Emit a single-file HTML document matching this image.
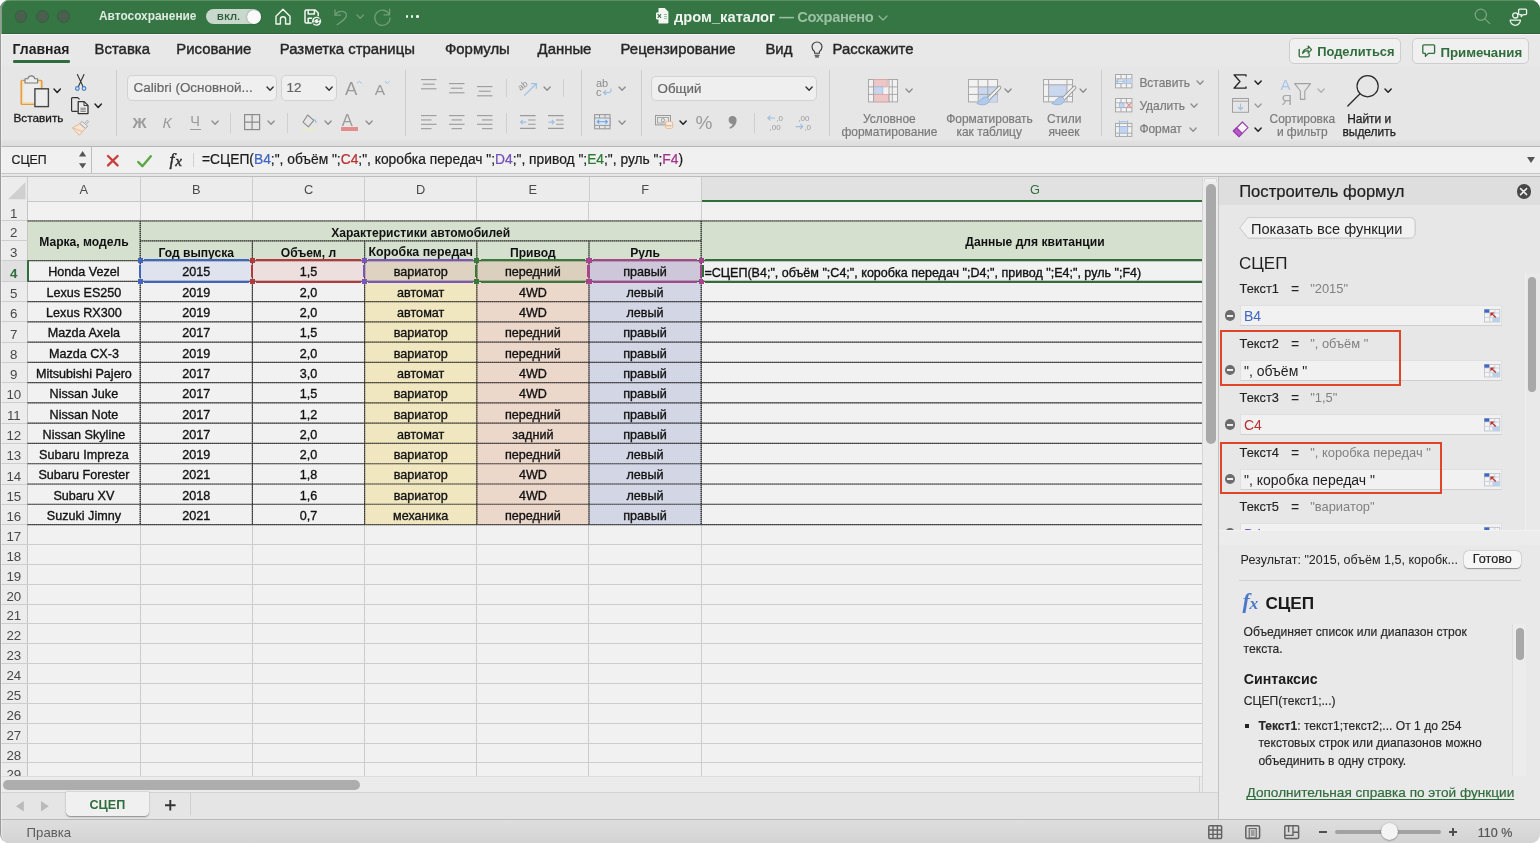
<!DOCTYPE html>
<html lang="ru"><head><meta charset="utf-8"><title>дром_каталог</title>
<style>
*{box-sizing:border-box;margin:0;padding:0}
html,body{width:1540px;height:843px;background:#fff;overflow:hidden}
body{font-family:"Liberation Sans",sans-serif;font-size:13px;color:#222;position:relative}
#win{position:absolute;left:0;top:0;width:1540px;height:843px;border-radius:9px;overflow:hidden;background:#e6e6e6;will-change:transform}
#win:after{content:"";position:absolute;left:0;top:0;width:1540px;height:843px;border-radius:9px;border-left:1px solid #9a9a9a;border-right:1px solid #b0b0b0;border-bottom:1px solid #999;box-shadow:inset 1px 0 0 rgba(255,255,255,.35);pointer-events:none}
.a{position:absolute}
.t{position:absolute;white-space:pre;line-height:1}
.c{text-align:center}
svg{position:absolute;overflow:visible}
.sep{position:absolute;width:1px;background:#cfcfcf}
</style></head>
<body><div id="win">
<div class="a" style="left:0px;top:0px;width:1540px;height:33.5px;background:#367644;border-top:1px solid #5c9166;border-bottom:1px solid #2d6538;"></div>
<div class="a" style="left:0px;top:33.5px;width:1540px;height:1px;background:#f4f4f4;"></div>
<div class="a" style="left:14.5px;top:10px;width:12.8px;height:12.8px;background:#4a5f4e;border-radius:50%;border:1px solid #2f6339;"></div>
<div class="a" style="left:35.8px;top:10px;width:12.8px;height:12.8px;background:#4a5f4e;border-radius:50%;border:1px solid #2f6339;"></div>
<div class="a" style="left:57.1px;top:10px;width:12.8px;height:12.8px;background:#4a5f4e;border-radius:50%;border:1px solid #2f6339;"></div>
<div class="t" style="top:11.01px;font-size:11.9px;color:#dfeae1;font-weight:bold;left:99px;">Автосохранение</div>
<div class="a" style="left:205.7px;top:9px;width:55.7px;height:15.2px;background:#c9d8cc;border-radius:8px;"></div>
<div class="t" style="top:12.34px;font-size:9.5px;color:#2e5c38;font-weight:bold;left:217px;letter-spacing:0.3px;">ВКЛ.</div>
<div class="a" style="left:246.5px;top:9.6px;width:14px;height:14px;background:#fafafa;border-radius:50%;box-shadow:0 0 1.5px rgba(0,0,0,.5);"></div>
<svg style="left:274.8px;top:7.6px;" width="16" height="17" viewBox="0 0 16 17"><path d="M1 16V8.3L8 1.2l7 7.1V16h-4.4v-4.7a2.6 2.6 0 0 0-5.2 0V16z" fill="none" stroke="#f2f6f2" stroke-width="1.4" stroke-linejoin="round"/></svg>
<svg style="left:303.8px;top:9px;" width="18" height="17" viewBox="0 0 18 17"><path d="M1 2.2a1.2 1.2 0 0 1 1.2-1.2h9l3 3v3.2M1 2.2v10.6a1.2 1.2 0 0 0 1.2 1.2h5.6M4.2 1v4h6.2V1M4.2 14V9.2h4" fill="none" stroke="#f2f6f2" stroke-width="1.5" stroke-linejoin="round"/><circle cx="12.6" cy="12.2" r="4.5" fill="#f2f6f2"/><path d="M10.2 11.6a2.6 2.6 0 0 1 4.6-1M15 12.8a2.6 2.6 0 0 1-4.6 1" fill="none" stroke="#367644" stroke-width="1.1"/><path d="M15.4 9.6v1.6h-1.6M9.8 14.8v-1.6h1.6" fill="none" stroke="#367644" stroke-width="1"/></svg>
<svg style="left:333.6px;top:8.6px;" width="14" height="16" viewBox="0 0 14 16"><path d="M1 .8v5.4h5.4" fill="none" stroke="#6f9f79" stroke-width="1.3" stroke-linecap="round" stroke-linejoin="round"/><path d="M1.2 6C3.6 1.6 11.6.8 12.4 6c.4 3.2-3.4 5.600-9.200 9.600" fill="none" stroke="#6f9f79" stroke-width="1.3" stroke-linecap="round"/></svg>
<svg style="left:357.3px;top:14.9px;" width="6.4" height="3.4" viewBox="0 0 6.4 3.4"><path d="M0 0L3.2 3.4L6.4 0" fill="none" stroke="#6f9f79" stroke-width="1.3" stroke-linecap="round" stroke-linejoin="round"/></svg>
<svg style="left:374.4px;top:8px;" width="17" height="17" viewBox="0 0 17 17"><path d="M15.600 1.2v5.600h-5.600" fill="none" stroke="#6f9f79" stroke-width="1.3" stroke-linecap="round" stroke-linejoin="round"/><path d="M15.2 6.400a7.600 7.600 0 1 0 .8 3.400" fill="none" stroke="#6f9f79" stroke-width="1.3" stroke-linecap="round"/></svg>
<div class="a" style="left:405.8px;top:15.4px;width:2.4px;height:2.4px;background:#f2f6f2;border-radius:50%;"></div>
<div class="a" style="left:411px;top:15.4px;width:2.4px;height:2.4px;background:#f2f6f2;border-radius:50%;"></div>
<div class="a" style="left:416.2px;top:15.4px;width:2.4px;height:2.4px;background:#f2f6f2;border-radius:50%;"></div>
<svg style="left:656px;top:8.4px;" width="12.4" height="15.6" viewBox="0 0 12.4 15.6"><path d="M2.5 0h6.2l3.7 3.7v10.6a1.2 1.2 0 0 1-1.2 1.2H2.5z" fill="#f4f7f4"/><rect x="0" y="4.6" width="6.8" height="6.8" rx=".8" fill="#f4f7f4"/><path d="M1.7 6.1l3.4 3.8M5.1 6.1L1.7 9.9" stroke="#367644" stroke-width="1.1"/><path d="M8 6.5h3M8 8.5h3M8 10.5h3" stroke="#9cc0a4" stroke-width="1"/></svg>
<div class="t" style="top:10.29px;font-size:14.7px;color:#eef3ef;font-weight:bold;left:674px;">дром_каталог <span style="color:#9cc0a4;letter-spacing:-0.38px">— Сохранено</span></div>
<svg style="left:878.7px;top:15.5px;" width="8" height="4" viewBox="0 0 8 4"><path d="M0 0L4 4L8 0" fill="none" stroke="#8fb597" stroke-width="1.3" stroke-linecap="round" stroke-linejoin="round"/></svg>
<svg style="left:1474px;top:8px;" width="18" height="18" viewBox="0 0 18 18"><circle cx="6.8" cy="6.8" r="5.6" fill="none" stroke="#7aa684" stroke-width="1.2"/><path d="M10.9 10.9l4.8 4.8" stroke="#7aa684" stroke-width="1.2" stroke-linecap="round"/></svg>
<svg style="left:1509px;top:7.5px;" width="19" height="18" viewBox="0 0 19 18"><circle cx="6.3" cy="7.4" r="2.6" fill="none" stroke="#eef3ef" stroke-width="1.3"/><path d="M1.2 12.2h10.2a5.1 5.1 0 0 1-10.2 0z" fill="none" stroke="#eef3ef" stroke-width="1.3" stroke-linejoin="round"/><path d="M10.6 1.2h6a1 1 0 0 1 1 1v3.4a1 1 0 0 1-1 1h-2.4l-2 2v-2h-1.6a1 1 0 0 1-1-1V2.2a1 1 0 0 1 1-1z" fill="none" stroke="#eef3ef" stroke-width="1.3" stroke-linejoin="round"/></svg>
<div class="a" style="left:0px;top:34.5px;width:1540px;height:31.5px;background:#e8e8e8;"></div>
<div class="t" style="top:42.42px;font-size:14px;color:#1e1e1e;font-weight:bold;left:12.5px;">Главная</div>
<div class="a" style="left:12.5px;top:60px;width:57px;height:2.6px;background:#2f6d3d;border-radius:1.3px;"></div>
<div class="t" style="top:42px;font-size:14.9px;color:#262626;left:94.6px;-webkit-text-stroke:0.4px #262626;">Вставка</div>
<div class="t" style="top:42px;font-size:14.9px;color:#262626;left:176.3px;-webkit-text-stroke:0.4px #262626;">Рисование</div>
<div class="t" style="top:42px;font-size:14.9px;color:#262626;left:279.8px;-webkit-text-stroke:0.4px #262626;">Разметка страницы</div>
<div class="t" style="top:42px;font-size:14.9px;color:#262626;left:445px;-webkit-text-stroke:0.4px #262626;">Формулы</div>
<div class="t" style="top:42px;font-size:14.9px;color:#262626;left:537.6px;-webkit-text-stroke:0.4px #262626;">Данные</div>
<div class="t" style="top:42px;font-size:14.9px;color:#262626;left:620.6px;-webkit-text-stroke:0.4px #262626;">Рецензирование</div>
<div class="t" style="top:42px;font-size:14.9px;color:#262626;left:765.4px;-webkit-text-stroke:0.4px #262626;">Вид</div>
<div class="t" style="top:42px;font-size:14.9px;color:#262626;left:832.6px;-webkit-text-stroke:0.4px #262626;">Расскажите</div>
<svg style="left:810.5px;top:41px;" width="12" height="16.5" viewBox="0 0 12 16.5"><path d="M3.6 10.6C2 9.4 1 7.8 1 6a5 5 0 0 1 10 0c0 1.8-1 3.4-2.6 4.6v1.6H3.6zM4 14.2h4M4.6 15.9h2.8" fill="none" stroke="#3a3a3a" stroke-width="1.15" stroke-linejoin="round" stroke-linecap="round"/></svg>
<div class="a" style="left:1289.4px;top:38.4px;width:112px;height:25.2px;background:#f0f0f0;border:1px solid #cdcdcd;border-radius:5px;"></div>
<svg style="left:1298px;top:43.5px;" width="14" height="14" viewBox="0 0 14 14"><path d="M1.200 5.400v6.400a1 1 0 0 0 1 1h8a1 1 0 0 0 1-1V9.800" fill="none" stroke="#2f6d3d" stroke-width="1.300" stroke-linecap="round"/><path d="M4.6 9.4c.4-3 2.4-4.7 5.6-4.8V2l3.4 3.6-3.4 3.6V6.7c-2.4 0-4.2.8-5.6 2.7z" fill="none" stroke="#2f6d3d" stroke-width="1.2" stroke-linejoin="round"/></svg>
<div class="t" style="top:46.04px;font-size:12.9px;color:#2f6d3d;font-weight:bold;left:1317.2px;">Поделиться</div>
<div class="a" style="left:1412.4px;top:38.4px;width:116.4px;height:25.2px;background:#f0f0f0;border:1px solid #cdcdcd;border-radius:5px;"></div>
<svg style="left:1421.6px;top:44px;" width="13.5" height="13.5" viewBox="0 0 13.5 13.5"><path d="M1.8.8h9.8a1 1 0 0 1 1 1v6.6a1 1 0 0 1-1 1H6.4L3.4 12.4V9.4H1.8a1 1 0 0 1-1-1V1.8a1 1 0 0 1 1-1z" fill="none" stroke="#2f6d3d" stroke-width="1.3" stroke-linejoin="round"/></svg>
<div class="t" style="top:45.85px;font-size:13.3px;color:#2f6d3d;font-weight:bold;left:1440.4px;">Примечания</div>
<div class="a" style="left:0px;top:66px;width:1540px;height:74.5px;background:#e6e6e6;"></div>
<svg style="left:19.5px;top:75px;" width="31" height="34" viewBox="0 0 31 34"><rect x="1.2" y="5.4" width="20.6" height="23.8" rx=".8" fill="#ececec" stroke="#e59a3c" stroke-width="1.5"/><rect x="2.6" y="6.8" width="17.8" height="21" fill="none" stroke="#f3dba8" stroke-width="1.3"/>
<path d="M5 8V3.800h2.800a3.600 3.800 0 0 1 7 0h2.800V8z" fill="#ededed" stroke="#7a7a7a" stroke-width="1.1" stroke-linejoin="round"/>
<rect x="14.9" y="13.800" width="13.5" height="17.800" fill="#ececec" stroke="#454545" stroke-width="1.4"/></svg>
<svg style="left:54px;top:88.7px;" width="6.4" height="3.4" viewBox="0 0 6.4 3.4"><path d="M0 0L3.2 3.4L6.4 0" fill="none" stroke="#222" stroke-width="1.5" stroke-linecap="round" stroke-linejoin="round"/></svg>
<div class="t" style="top:113.35px;font-size:11.8px;color:#1c1c1c;left:13.5px;-webkit-text-stroke:0.3px #1c1c1c;">Вставить</div>
<svg style="left:74.6px;top:74px;" width="11.4" height="17.5" viewBox="0 0 11.4 17.5"><path d="M2.400 0.500L8 12.600M9 0.500L3.400 12.600" stroke="#333" stroke-width="1.100" stroke-linecap="round"/>
<circle cx="2.400" cy="14.500" r="1.800" fill="none" stroke="#3f7fd0" stroke-width="1.200"/><circle cx="9" cy="14.500" r="1.800" fill="none" stroke="#3f7fd0" stroke-width="1.200"/></svg>
<svg style="left:71.4px;top:96.8px;" width="18" height="17.5" viewBox="0 0 18 17.5"><path d="M6.600 14.400H1.600a1 1 0 0 1-1-1V1.600a1 1 0 0 1 1-1h5l2 1.800" fill="none" stroke="#333" stroke-width="1.200"/>
<path d="M7.200 4.600h6l3.800 3.800v8.200h-9.800z" fill="#ececec" stroke="#333" stroke-width="1.300" stroke-linejoin="round"/><path d="M13 4.800v3.800h3.800" fill="none" stroke="#333" stroke-width="1"/>
<path d="M9.400 11.200h5.400M9.400 12.800h5.400M9.400 14.400h5.400" stroke="#666" stroke-width=".8"/></svg>
<svg style="left:95px;top:103.7px;" width="6.4" height="3.4" viewBox="0 0 6.4 3.4"><path d="M0 0L3.2 3.4L6.4 0" fill="none" stroke="#222" stroke-width="1.5" stroke-linecap="round" stroke-linejoin="round"/></svg>
<svg style="left:72px;top:120px;" width="17" height="16" viewBox="0 0 17 16"><path d="M7.600 3.800l5.800 4.500-6.200 7.100-6.700-7.600z" fill="#f4e4d4" stroke="#e8b890" stroke-width="1" stroke-linejoin="round"/><path d="M.5 7.800l9.500 3.600" stroke="#e8b890" stroke-width=".9"/>
<path d="M7.800 3.600l2-2.200 5.800 4.600-2 2.400z" fill="#ebebeb" stroke="#a8a8a8" stroke-width="1" stroke-linejoin="round"/><path d="M12.800 3.200L15.200.4l1.400 1.100-2.400 2.900" fill="#ebebeb" stroke="#a8a8a8" stroke-width="1" stroke-linejoin="round"/></svg>
<div class="a" style="left:116.4px;top:70px;width:1px;height:66px;background:#cdcdcd;"></div>
<div class="a" style="left:127.3px;top:75.4px;width:150.2px;height:25.3px;background:#efefef;border:1px solid #d2d2d2;border-radius:5px;"></div>
<div class="t" style="top:81.28px;font-size:13.45px;color:#666;left:133.6px;-webkit-text-stroke:0.2px #666;">Calibri (Основной...</div>
<svg style="left:266.5px;top:86.95px;" width="6.2" height="3.3" viewBox="0 0 6.2 3.3"><path d="M0 0L3.1 3.3L6.2 0" fill="none" stroke="#333" stroke-width="1.4" stroke-linecap="round" stroke-linejoin="round"/></svg>
<div class="a" style="left:280.5px;top:75.4px;width:56.6px;height:25.3px;background:#efefef;border:1px solid #d2d2d2;border-radius:5px;"></div>
<div class="t" style="top:81.28px;font-size:13.45px;color:#666;left:286.6px;-webkit-text-stroke:0.2px #666;">12</div>
<svg style="left:326.1px;top:86.95px;" width="6.2" height="3.3" viewBox="0 0 6.2 3.3"><path d="M0 0L3.1 3.3L6.2 0" fill="none" stroke="#333" stroke-width="1.4" stroke-linecap="round" stroke-linejoin="round"/></svg>
<div class="t" style="top:79.6px;font-size:18.5px;color:#9a9a9a;left:345px;">A</div>
<svg style="left:356.8px;top:80.6px;" width="4.6" height="2.6" viewBox="0 0 4.6 2.6"><path d="M0 2.4L2.3.3 4.6 2.4" fill="none" stroke="#9dbfe3" stroke-width="1"/></svg>
<div class="t" style="top:82.02px;font-size:15.5px;color:#9a9a9a;left:374.8px;">A</div>
<svg style="left:384.6px;top:80.6px;" width="4.6" height="2.6" viewBox="0 0 4.6 2.6"><path d="M0 .3L2.3 2.4 4.6 .3" fill="none" stroke="#9dbfe3" stroke-width="1"/></svg>
<div class="t" style="top:114.52px;font-size:15.5px;color:#9b9b9b;font-weight:bold;left:132.6px;">Ж</div>
<div class="t" style="top:114.52px;font-size:15.5px;color:#9b9b9b;left:162.6px;font-style:italic;">К</div>
<div class="t" style="top:114.48px;font-size:14.5px;color:#9b9b9b;left:190.2px;">Ч</div>
<div class="a" style="left:190px;top:128.6px;width:11px;height:1px;background:#9b9b9b;"></div>
<svg style="left:211.7px;top:120.75px;" width="6.2" height="3.3" viewBox="0 0 6.2 3.3"><path d="M0 0L3.1 3.3L6.2 0" fill="none" stroke="#8c8c8c" stroke-width="1.3" stroke-linecap="round" stroke-linejoin="round"/></svg>
<div class="a" style="left:230.4px;top:113px;width:1px;height:19.5px;background:#cfcfcf;"></div>
<svg style="left:243.6px;top:113.6px;" width="16.2" height="16.2" viewBox="0 0 16.2 16.2"><rect x=".6" y=".6" width="15" height="15" fill="none" stroke="#8a8a8a" stroke-width="1.2"/><path d="M8.1 .6v15M.6 8.1h15" stroke="#8a8a8a" stroke-width="1.2"/></svg>
<svg style="left:268.3px;top:120.75px;" width="6.2" height="3.3" viewBox="0 0 6.2 3.3"><path d="M0 0L3.1 3.3L6.2 0" fill="none" stroke="#8c8c8c" stroke-width="1.3" stroke-linecap="round" stroke-linejoin="round"/></svg>
<div class="a" style="left:287px;top:113px;width:1px;height:19.5px;background:#cfcfcf;"></div>
<svg style="left:302.4px;top:113.5px;" width="15.5" height="16" viewBox="0 0 15.5 16"><path d="M5.6 1l6.2 5.4-5.4 6.4L1 8.2z" fill="none" stroke="#8c8c8c" stroke-width="1.1" stroke-linejoin="round"/>
<path d="M11.6 5.4c1.4.4 2.4 1.6 2.6 3.6" fill="none" stroke="#9dbfe3" stroke-width="1.2"/><path d="M0 15h14" stroke="#e6ecd0" stroke-width="2.4"/></svg>
<svg style="left:324.9px;top:120.75px;" width="6.2" height="3.3" viewBox="0 0 6.2 3.3"><path d="M0 0L3.1 3.3L6.2 0" fill="none" stroke="#8c8c8c" stroke-width="1.3" stroke-linecap="round" stroke-linejoin="round"/></svg>
<div class="t" style="top:111.65px;font-size:16.5px;color:#9b9b9b;left:341.8px;">A</div>
<div class="a" style="left:341.4px;top:127.4px;width:17px;height:3.6px;background:#e58c8c;"></div>
<svg style="left:365.7px;top:120.75px;" width="6.2" height="3.3" viewBox="0 0 6.2 3.3"><path d="M0 0L3.1 3.3L6.2 0" fill="none" stroke="#8c8c8c" stroke-width="1.3" stroke-linecap="round" stroke-linejoin="round"/></svg>
<div class="a" style="left:404.9px;top:70px;width:1px;height:66px;background:#cdcdcd;"></div>
<svg style="left:420.8px;top:79.2px;" width="15.5" height="13.8" viewBox="0 0 15.5 13.8"><path d="M0 0.6H15.5" stroke="#9a9a9a" stroke-width="1.1"/><path d="M1.75 5.2H13.75" stroke="#9a9a9a" stroke-width="1.1"/><path d="M0 9.8H15.5" stroke="#9a9a9a" stroke-width="1.1"/></svg>
<svg style="left:448.6px;top:82.6px;" width="15.5" height="13.8" viewBox="0 0 15.5 13.8"><path d="M0 0.6H15.5" stroke="#9a9a9a" stroke-width="1.1"/><path d="M1.75 5.2H13.75" stroke="#9a9a9a" stroke-width="1.1"/><path d="M0 9.8H15.5" stroke="#9a9a9a" stroke-width="1.1"/></svg>
<svg style="left:476.6px;top:86.2px;" width="15.5" height="13.8" viewBox="0 0 15.5 13.8"><path d="M0 0.6H15.5" stroke="#9a9a9a" stroke-width="1.1"/><path d="M1.75 5.2H13.75" stroke="#9a9a9a" stroke-width="1.1"/><path d="M0 9.8H15.5" stroke="#9a9a9a" stroke-width="1.1"/></svg>
<div class="a" style="left:506px;top:78.7px;width:1px;height:18.6px;background:#cfcfcf;"></div>
<svg style="left:519px;top:78px;" width="19" height="19" viewBox="0 0 19 19"><text x="0" y="9.5" font-size="9" fill="#8c8c8c" transform="rotate(-38 6 9)" font-family="Liberation Sans">ab</text><path d="M5.2 17.6L17 6M12 5.6h5.3v5.2" fill="none" stroke="#9dbfe3" stroke-width="1.2"/></svg>
<svg style="left:543.9px;top:86.95px;" width="6.2" height="3.3" viewBox="0 0 6.2 3.3"><path d="M0 0L3.1 3.3L6.2 0" fill="none" stroke="#8c8c8c" stroke-width="1.3" stroke-linecap="round" stroke-linejoin="round"/></svg>
<div class="a" style="left:562.9px;top:78.7px;width:1px;height:18.6px;background:#cfcfcf;"></div>
<svg style="left:420.8px;top:115px;" width="15.5" height="17.4" viewBox="0 0 15.5 17.4"><path d="M0 0.6H15.5" stroke="#9a9a9a" stroke-width="1.1"/><path d="M0 4.95H10.5" stroke="#9a9a9a" stroke-width="1.1"/><path d="M0 9.3H15.5" stroke="#9a9a9a" stroke-width="1.1"/><path d="M0 13.65H10.5" stroke="#9a9a9a" stroke-width="1.1"/></svg>
<svg style="left:448.6px;top:115px;" width="15.5" height="17.4" viewBox="0 0 15.5 17.4"><path d="M0 0.6H15.5" stroke="#9a9a9a" stroke-width="1.1"/><path d="M2.5 4.95H13" stroke="#9a9a9a" stroke-width="1.1"/><path d="M0 9.3H15.5" stroke="#9a9a9a" stroke-width="1.1"/><path d="M2.5 13.65H13" stroke="#9a9a9a" stroke-width="1.1"/></svg>
<svg style="left:476.6px;top:115px;" width="15.5" height="17.4" viewBox="0 0 15.5 17.4"><path d="M0 0.6H15.5" stroke="#9a9a9a" stroke-width="1.1"/><path d="M5 4.95H15.5" stroke="#9a9a9a" stroke-width="1.1"/><path d="M0 9.3H15.5" stroke="#9a9a9a" stroke-width="1.1"/><path d="M5 13.65H15.5" stroke="#9a9a9a" stroke-width="1.1"/></svg>
<div class="a" style="left:506px;top:113px;width:1px;height:19.5px;background:#cfcfcf;"></div>
<svg style="left:520.4px;top:115px;" width="15.6" height="14" viewBox="0 0 15.6 14"><path d="M0 .6h15.6M8 4.95h7.6M8 9.3h7.6M0 13.4h15.6" stroke="#9a9a9a" stroke-width="1.1"/><path d="M6.4 7.1H.6M2.8 4.8L.5 7.1l2.3 2.3" fill="none" stroke="#9dbfe3" stroke-width="1.1"/></svg>
<svg style="left:548px;top:115px;" width="15.6" height="14" viewBox="0 0 15.6 14"><path d="M0 .6h15.6M8 4.95h7.6M8 9.3h7.6M0 13.4h15.6" stroke="#9a9a9a" stroke-width="1.1"/><path d="M.4 7.1h5.8M3.8 4.8l2.3 2.3-2.3 2.3" fill="none" stroke="#9dbfe3" stroke-width="1.1"/></svg>
<div class="a" style="left:580.9px;top:70px;width:1px;height:66px;background:#cdcdcd;"></div>
<svg style="left:596px;top:80px;" width="17" height="17" viewBox="0 0 17 17"><text x="0" y="7.4" font-size="11" fill="#8c8c8c" font-family="Liberation Sans">ab</text><text x="0" y="16" font-size="11" fill="#8c8c8c" font-family="Liberation Sans">c</text><path d="M15 8.6v1.6a2.4 2.4 0 0 1-2.4 2.4H7.8M10 10.2l-2.4 2.4 2.4 2.4" fill="none" stroke="#9dbfe3" stroke-width="1.2"/></svg>
<svg style="left:619.2px;top:86.95px;" width="6.2" height="3.3" viewBox="0 0 6.2 3.3"><path d="M0 0L3.1 3.3L6.2 0" fill="none" stroke="#8c8c8c" stroke-width="1.3" stroke-linecap="round" stroke-linejoin="round"/></svg>
<svg style="left:594.3px;top:114px;" width="16.6" height="15.4" viewBox="0 0 16.6 15.4"><rect x=".6" y=".6" width="15.4" height="14.2" fill="none" stroke="#9a9a9a" stroke-width="1.1"/><rect x=".6" y="4" width="15.4" height="7.4" fill="#dde8f5" stroke="#9a9a9a" stroke-width="1"/><path d="M5.5 .6v3.4M11 .6v3.4M5.5 11.4v3.4M11 11.4v3.4" stroke="#9a9a9a" stroke-width="1"/><path d="M3.2 7.7h10.2M5.2 5.8L3.2 7.7l2 1.9M11.4 5.8l2 1.9-2 1.9" fill="none" stroke="#6fa0d6" stroke-width="1.1"/></svg>
<svg style="left:619.2px;top:120.75px;" width="6.2" height="3.3" viewBox="0 0 6.2 3.3"><path d="M0 0L3.1 3.3L6.2 0" fill="none" stroke="#8c8c8c" stroke-width="1.3" stroke-linecap="round" stroke-linejoin="round"/></svg>
<div class="a" style="left:640.6px;top:70px;width:1px;height:66px;background:#cdcdcd;"></div>
<div class="a" style="left:651.4px;top:75.6px;width:165.2px;height:25.2px;background:#efefef;border:1px solid #d2d2d2;border-radius:5px;"></div>
<div class="t" style="top:81.55px;font-size:13.3px;color:#666;left:657.6px;-webkit-text-stroke:0.2px #666;">Общий</div>
<svg style="left:805.5px;top:87.15px;" width="6.2" height="3.3" viewBox="0 0 6.2 3.3"><path d="M0 0L3.1 3.3L6.2 0" fill="none" stroke="#333" stroke-width="1.4" stroke-linecap="round" stroke-linejoin="round"/></svg>
<svg style="left:654.8px;top:115.4px;" width="18.4" height="14.4" viewBox="0 0 18.4 14.4"><rect x=".5" y=".5" width="15" height="9.4" fill="none" stroke="#9a9a9a" stroke-width="1"/><rect x="2.4" y="2.4" width="11.2" height="5.6" fill="none" stroke="#9a9a9a" stroke-width=".8"/><circle cx="8" cy="5.2" r="1.7" fill="none" stroke="#9a9a9a" stroke-width=".8"/><path d="M10.6 7.6c0-1.6 7-1.6 7 0v4.8c0 1.6-7 1.6-7 0zM10.6 9.9c0 1.5 7 1.5 7 0" fill="#f6e8da" stroke="#e9b68c" stroke-width=".9"/></svg>
<svg style="left:679.8px;top:120.95px;" width="6.2" height="3.3" viewBox="0 0 6.2 3.3"><path d="M0 0L3.1 3.3L6.2 0" fill="none" stroke="#222" stroke-width="1.5" stroke-linecap="round" stroke-linejoin="round"/></svg>
<div class="t" style="top:113.37px;font-size:19px;color:#9a9a9a;left:695.6px;">%</div>
<svg style="left:728.4px;top:115.6px;" width="9" height="13" viewBox="0 0 9 13"><path d="M4.6 0a4 4 0 0 1 4 4.2c0 4-3 7.4-6.6 8.6l-.6-1.2c1.8-.9 3-2.2 3.3-3.6A3.9 3.9 0 0 1 .6 4 4 4 0 0 1 4.6 0z" fill="#8c8c8c"/></svg>
<div class="a" style="left:754.3px;top:113px;width:1px;height:19.5px;background:#cfcfcf;"></div>
<svg style="left:766.6px;top:113.8px;" width="18" height="17" viewBox="0 0 18 17"><path d="M8 4H.8M3.4 1.6L.8 4l2.6 2.4" fill="none" stroke="#9dbfe3" stroke-width="1.1"/><text x="9.4" y="7.2" font-size="8" fill="#9a9a9a" font-family="Liberation Sans">,0</text><text x="2.6" y="16" font-size="8" fill="#9a9a9a" font-family="Liberation Sans">,00</text></svg>
<svg style="left:794.6px;top:113.8px;" width="18" height="17" viewBox="0 0 18 17"><text x="3.4" y="7.2" font-size="8" fill="#9a9a9a" font-family="Liberation Sans">,00</text><path d="M.6 12.6h7.2M5.2 10.2l2.6 2.4-2.6 2.4" fill="none" stroke="#9dbfe3" stroke-width="1.1"/><text x="9.4" y="16" font-size="8" fill="#9a9a9a" font-family="Liberation Sans">,0</text></svg>
<div class="a" style="left:828.6px;top:70px;width:1px;height:66px;background:#cdcdcd;"></div>
<svg style="left:868px;top:78.5px;" width="30" height="23.4" viewBox="0 0 30 23.4"><rect x=".5" y=".5" width="29" height="22.4" fill="#f2f2f2" stroke="#a8a8a8" stroke-width="1"/>
<rect x="5.6" y=".5" width="13.6" height="7.4" fill="#edc6c6" stroke="#e3a3a3" stroke-width=".8"/><rect x="5.6" y="7.9" width="9.2" height="7.4" fill="#c6d6ee" stroke="#9fb9e0" stroke-width=".8"/><rect x="5.6" y="15.4" width="15.4" height="7.4" fill="#edc6c6" stroke="#e3a3a3" stroke-width=".8"/>
<path d="M5.6 .5v22.4M21 .5v22.4M24.3 .5v22.4M.5 7.9h5M.5 15.4h5M21 7.9h8.5M21 15.4h8.5" stroke="#a8a8a8" stroke-width="1" fill="none"/></svg>
<svg style="left:905.7px;top:88.95px;" width="6.2" height="3.3" viewBox="0 0 6.2 3.3"><path d="M0 0L3.1 3.3L6.2 0" fill="none" stroke="#8c8c8c" stroke-width="1.3" stroke-linecap="round" stroke-linejoin="round"/></svg>
<div class="t" style="top:113.98px;font-size:11.95px;color:#7a7a7a;left:689.4px;width:400px;text-align:center;-webkit-text-stroke:0.18px;">Условное</div>
<div class="t" style="top:127.48px;font-size:11.95px;color:#7a7a7a;left:689.4px;width:400px;text-align:center;-webkit-text-stroke:0.18px;">форматирование</div>
<svg style="left:967.5px;top:78.5px;" width="32" height="25" viewBox="0 0 32 25"><rect x=".5" y=".5" width="29" height="22.4" fill="#f2f2f2" stroke="#a8a8a8" stroke-width="1"/>
<rect x="10.2" y="7.9" width="19.3" height="15" fill="#c9d8ee"/>
<path d="M10.2 .5v22.4M19.8 .5v22.4M.5 7.9h29M.5 15.4h29" stroke="#a8a8a8" stroke-width="1" fill="none"/>
<path d="M31.4 8.6L20.2 20" stroke="#9c9c9c" stroke-width="4" stroke-linecap="round"/><path d="M31.4 8.6L20.2 20" stroke="#f2f2f2" stroke-width="2" stroke-linecap="round"/>
<path d="M19 18.2c-4.4-.8-5.8 3.4-10.2 6.2 4.8 2.6 12 1.6 13-3.6z" fill="#b3c9e8" stroke="#8fb0dc" stroke-width=".9"/></svg>
<svg style="left:1004.9px;top:88.95px;" width="6.2" height="3.3" viewBox="0 0 6.2 3.3"><path d="M0 0L3.1 3.3L6.2 0" fill="none" stroke="#8c8c8c" stroke-width="1.3" stroke-linecap="round" stroke-linejoin="round"/></svg>
<div class="t" style="top:113.98px;font-size:11.95px;color:#7a7a7a;left:789.5px;width:400px;text-align:center;-webkit-text-stroke:0.18px;">Форматировать</div>
<div class="t" style="top:127.48px;font-size:11.95px;color:#7a7a7a;left:789.2px;width:400px;text-align:center;-webkit-text-stroke:0.18px;">как таблицу</div>
<svg style="left:1042.9px;top:78.5px;" width="32" height="25" viewBox="0 0 32 25"><rect x=".5" y=".5" width="29" height="22.4" fill="#f2f2f2" stroke="#a8a8a8" stroke-width="1"/>
<rect x="5.6" y="5.8" width="18.4" height="11.6" fill="#c9d8ee"/>
<path d="M5.6 .5v22.4M24 .5v22.4M.5 5.8h29M.5 17.4h29" stroke="#a8a8a8" stroke-width="1" fill="none"/>
<path d="M31.4 8.6L20.2 20" stroke="#9c9c9c" stroke-width="4" stroke-linecap="round"/><path d="M31.4 8.6L20.2 20" stroke="#f2f2f2" stroke-width="2" stroke-linecap="round"/>
<path d="M19 18.2c-4.4-.8-5.8 3.4-10.2 6.2 4.8 2.6 12 1.6 13-3.6z" fill="#b3c9e8" stroke="#8fb0dc" stroke-width=".9"/></svg>
<svg style="left:1079.9px;top:88.95px;" width="6.2" height="3.3" viewBox="0 0 6.2 3.3"><path d="M0 0L3.1 3.3L6.2 0" fill="none" stroke="#8c8c8c" stroke-width="1.3" stroke-linecap="round" stroke-linejoin="round"/></svg>
<div class="t" style="top:113.98px;font-size:11.95px;color:#7a7a7a;left:864.2px;width:400px;text-align:center;-webkit-text-stroke:0.18px;">Стили</div>
<div class="t" style="top:127.48px;font-size:11.95px;color:#7a7a7a;left:864px;width:400px;text-align:center;-webkit-text-stroke:0.18px;">ячеек</div>
<div class="a" style="left:1101px;top:70px;width:1px;height:66px;background:#cdcdcd;"></div>
<svg style="left:1115.3px;top:74.4px;" width="17.4" height="14.4" viewBox="0 0 17.4 14.4"><rect x=".5" y=".5" width="16.4" height="13.4" fill="#f3f3f3" stroke="#a8a8a8" stroke-width="1"/><path d="M6 .5v4.4M11.4 .5v4.4M6 9.6v4.3M11.4 9.6v4.3M.5 4.9h16.4M.5 9.6h16.4" stroke="#a8a8a8" stroke-width="1"/><rect x="7.4" y="4.9" width="9.5" height="4.7" fill="#c3d5ee"/><path d="M11.4 4.9v4.7" stroke="#a9c3e6" stroke-width="1"/><path d="M9.6 7.25H1.4M4 4.6L1.3 7.25 4 9.9" fill="none" stroke="#9dbfe3" stroke-width="1.1"/></svg>
<div class="t" style="top:77.58px;font-size:11.95px;color:#7a7a7a;left:1139.4px;-webkit-text-stroke:0.18px;">Вставить</div>
<svg style="left:1196.6px;top:80.75px;" width="6.2" height="3.3" viewBox="0 0 6.2 3.3"><path d="M0 0L3.1 3.3L6.2 0" fill="none" stroke="#8c8c8c" stroke-width="1.3" stroke-linecap="round" stroke-linejoin="round"/></svg>
<svg style="left:1115.3px;top:98.3px;" width="17.4" height="14.4" viewBox="0 0 17.4 14.4"><rect x=".5" y=".5" width="16.4" height="13.4" fill="#f3f3f3" stroke="#a8a8a8" stroke-width="1"/><path d="M6 .5v4.4M11.4 .5v4.4M6 9.6v4.3M11.4 9.6v4.3M.5 4.9h16.4M.5 9.6h16.4" stroke="#a8a8a8" stroke-width="1"/><rect x="1" y="5.4" width="15.4" height="3.7" fill="#ededed"/><rect x="4.4" y="5" width="4.6" height="4.5" fill="#c3d5ee" stroke="#9dbbe2" stroke-width=".8"/><path d="M11.6 4.8l4.8 4.9M16.4 4.8l-4.8 4.9" stroke="#e58c8c" stroke-width="1.1"/></svg>
<div class="t" style="top:100.98px;font-size:11.95px;color:#7a7a7a;left:1139.4px;-webkit-text-stroke:0.18px;">Удалить</div>
<svg style="left:1190.9px;top:104.15px;" width="6.2" height="3.3" viewBox="0 0 6.2 3.3"><path d="M0 0L3.1 3.3L6.2 0" fill="none" stroke="#8c8c8c" stroke-width="1.3" stroke-linecap="round" stroke-linejoin="round"/></svg>
<svg style="left:1115.3px;top:120px;" width="17.4" height="17" viewBox="0 0 17.4 17"><path d="M4.4 .4v2.6M12.6 .4v2.6M4.4 1.7h8.2" stroke="#9dbfe3" stroke-width="1"/><rect x=".5" y="3.4" width="16.4" height="13" fill="#f3f3f3" stroke="#a8a8a8" stroke-width="1"/><path d="M4.4 3.4v13M12.6 3.4v13M.5 6.6h16.4M.5 13.2h16.4" stroke="#a8a8a8" stroke-width="1"/><rect x="4.4" y="6.6" width="8.2" height="6.6" fill="#c3d5ee" stroke="#9dbbe2" stroke-width=".8"/></svg>
<div class="t" style="top:124.28px;font-size:11.95px;color:#7a7a7a;left:1139.4px;-webkit-text-stroke:0.18px;">Формат</div>
<svg style="left:1189.9px;top:127.55px;" width="6.2" height="3.3" viewBox="0 0 6.2 3.3"><path d="M0 0L3.1 3.3L6.2 0" fill="none" stroke="#8c8c8c" stroke-width="1.3" stroke-linecap="round" stroke-linejoin="round"/></svg>
<div class="a" style="left:1217.5px;top:70px;width:1px;height:66px;background:#cdcdcd;"></div>
<svg style="left:1233px;top:74px;" width="14" height="15" viewBox="0 0 14 15"><path d="M13 2.6V.8H1l6 6.7-6 6.7h12v-1.8" fill="none" stroke="#222" stroke-width="1.3" stroke-linejoin="round"/></svg>
<svg style="left:1255.4px;top:80.95px;" width="6.2" height="3.3" viewBox="0 0 6.2 3.3"><path d="M0 0L3.1 3.3L6.2 0" fill="none" stroke="#222" stroke-width="1.5" stroke-linecap="round" stroke-linejoin="round"/></svg>
<svg style="left:1231.6px;top:98px;" width="17" height="14.8" viewBox="0 0 17 14.8"><rect x=".5" y=".5" width="16" height="13.8" fill="none" stroke="#a0a0a0" stroke-width="1"/><path d="M.5 3.2h16" stroke="#a0a0a0" stroke-width="1"/><path d="M8.5 5.4v6M6 9l2.5 2.6L11 9" fill="none" stroke="#9dbfe3" stroke-width="1.1"/></svg>
<svg style="left:1255.4px;top:104.15px;" width="6.2" height="3.3" viewBox="0 0 6.2 3.3"><path d="M0 0L3.1 3.3L6.2 0" fill="none" stroke="#9a9a9a" stroke-width="1.3" stroke-linecap="round" stroke-linejoin="round"/></svg>
<svg style="left:1231.6px;top:120.6px;" width="17" height="16.6" viewBox="0 0 17 16.6"><path d="M10.4 1L16 6.6 7 15.6 1.4 10z" fill="#f4f4f4" stroke="#9c3fae" stroke-width="1.2" stroke-linejoin="round"/><path d="M4.6 6.8l5.6 5.6L7 15.6 1.4 10z" fill="#b65cc6" stroke="#9c3fae" stroke-width="1.2" stroke-linejoin="round"/></svg>
<svg style="left:1255.4px;top:127.75px;" width="6.2" height="3.3" viewBox="0 0 6.2 3.3"><path d="M0 0L3.1 3.3L6.2 0" fill="none" stroke="#222" stroke-width="1.5" stroke-linecap="round" stroke-linejoin="round"/></svg>
<div class="t" style="top:76.55px;font-size:15px;color:#a9c6e6;left:1280.6px;">А</div>
<div class="t" style="top:91.55px;font-size:15px;color:#a8a8a8;left:1281.2px;">Я</div>
<svg style="left:1293.6px;top:82.6px;" width="17.2" height="17.4" viewBox="0 0 17.2 17.4"><path d="M.6 .6h16l-5.8 7.4v8.4H6.4V8z" fill="none" stroke="#a0a0a0" stroke-width="1.1" stroke-linejoin="round"/></svg>
<svg style="left:1318.3px;top:88.55px;" width="6.2" height="3.3" viewBox="0 0 6.2 3.3"><path d="M0 0L3.1 3.3L6.2 0" fill="none" stroke="#b0b0b0" stroke-width="1.3" stroke-linecap="round" stroke-linejoin="round"/></svg>
<div class="t" style="top:114.28px;font-size:11.95px;color:#7a7a7a;left:1102.3px;width:400px;text-align:center;-webkit-text-stroke:0.18px;">Сортировка</div>
<div class="t" style="top:126.98px;font-size:11.95px;color:#7a7a7a;left:1102.3px;width:400px;text-align:center;-webkit-text-stroke:0.18px;">и фильтр</div>
<svg style="left:1346.5px;top:75px;" width="32" height="32" viewBox="0 0 32 32"><circle cx="20.6" cy="11.2" r="10.6" fill="none" stroke="#2a2a2a" stroke-width="1.2"/><path d="M13 18.8L.8 31" stroke="#2a2a2a" stroke-width="1.3" stroke-linecap="round"/></svg>
<svg style="left:1385.2px;top:88.55px;" width="6.2" height="3.3" viewBox="0 0 6.2 3.3"><path d="M0 0L3.1 3.3L6.2 0" fill="none" stroke="#222" stroke-width="1.5" stroke-linecap="round" stroke-linejoin="round"/></svg>
<div class="t" style="top:114.28px;font-size:11.95px;color:#1c1c1c;left:1169.2px;width:400px;text-align:center;-webkit-text-stroke:0.25px;">Найти и</div>
<div class="t" style="top:126.98px;font-size:11.95px;color:#1c1c1c;left:1169.2px;width:400px;text-align:center;-webkit-text-stroke:0.25px;">выделить</div>
<div class="a" style="left:0px;top:139.8px;width:1540px;height:6px;background:linear-gradient(#e3e3e3,#dcdcdc);"></div>
<div class="a" style="left:0px;top:145.6px;width:1540px;height:1px;background:#b6b6b6;"></div>
<div class="a" style="left:0px;top:146.5px;width:1540px;height:26.2px;background:#f0f0f0;"></div>
<div class="a" style="left:0px;top:172.6px;width:1540px;height:1px;background:#c6c6c6;"></div>
<div class="a" style="left:0px;top:173.6px;width:1540px;height:2.2px;background:#e6e6e6;"></div>
<div class="a" style="left:0px;top:175.6px;width:1540px;height:1.1px;background:#bcbcbc;"></div>
<div class="a" style="left:90.6px;top:146.5px;width:1.2px;height:26.2px;background:#bdbdbd;"></div>
<div class="t" style="top:153.62px;font-size:12.3px;color:#1c1c1c;left:11.6px;-webkit-text-stroke:0.22px;">СЦЕП</div>
<svg style="left:78.8px;top:151.1px;" width="7.2" height="17.6" viewBox="0 0 7.2 17.6"><path d="M0 5.4L3.6 0l3.6 5.4zM0 12.2l3.6 5.4 3.6-5.4z" fill="#555"/></svg>
<svg style="left:107.2px;top:154.6px;" width="11.6" height="11.4" viewBox="0 0 11.6 11.4"><path d="M1 1l9.6 9.4M10.6 1L1 10.4" stroke="#c9413f" stroke-width="2.4" stroke-linecap="round"/></svg>
<svg style="left:137.3px;top:154.6px;" width="15" height="12.4" viewBox="0 0 15 12.4"><path d="M1.2 7l4.2 4.2L13.8 1.2" fill="none" stroke="#58a744" stroke-width="2.4" stroke-linecap="round" stroke-linejoin="round"/></svg>
<div class="t" style="top:151.38px;font-size:17.5px;color:#2c2c2c;left:169.4px;font-family:&quot;Liberation Serif&quot;,serif;font-style:italic;-webkit-text-stroke:0.45px #2c2c2c;">f</div>
<div class="t" style="top:154.15px;font-size:15px;color:#2c2c2c;left:175.2px;font-family:&quot;Liberation Serif&quot;,serif;font-style:italic;-webkit-text-stroke:0.45px #2c2c2c;">x</div>
<div class="a" style="left:193.4px;top:152.5px;width:1px;height:14.5px;background:#d0d0d0;"></div>
<div class="t" style="top:153.41px;font-size:13.8px;color:#1c1c1c;left:202px;-webkit-text-stroke:0.22px;">=СЦЕП(<span style="color:#3f66c0">B4</span>;", объём ";<span style="color:#b8312f">C4</span>;", коробка передач ";<span style="color:#7350b8">D4</span>;", привод ";<span style="color:#2f7a35">E4</span>;", руль ";<span style="color:#a2338a">F4</span>)</div>
<svg style="left:1527px;top:157.2px;" width="8" height="6" viewBox="0 0 8 6"><path d="M0 0h8L4 6z" fill="#555"/></svg>
<div class="a" style="left:0px;top:176.6px;width:1202.3px;height:599.4px;background:#f1f1f1;"></div>
<div class="a" style="left:0px;top:176.6px;width:1202.3px;height:25.2px;background:#ececec;border-bottom:1.2px solid #c6c6c6;"></div>
<div class="a" style="left:701.2px;top:176.6px;width:501.1px;height:24.6px;background:#e1e1e1;"></div>
<div class="a" style="left:701.2px;top:200px;width:501.1px;height:2.1px;background:#2f6d3d;"></div>
<svg style="left:7.8px;top:181.8px;" width="17.6" height="17.2" viewBox="0 0 17.6 17.2"><path d="M17.6 0V17.2H0z" fill="#cfcfcf"/></svg>
<div class="a" style="left:0px;top:201.2px;width:28.2px;height:574.8px;background:#ececec;border-right:1.4px solid #c4c4c4;"></div>
<div class="a" style="left:0px;top:260.6px;width:27px;height:20.7px;background:#e0e0e0;"></div>
<div class="t" style="top:184.18px;font-size:12.8px;color:#4a4a4a;left:63.9px;width:40px;text-align:center;">A</div>
<div class="t" style="top:184.18px;font-size:12.8px;color:#4a4a4a;left:176.3px;width:40px;text-align:center;">B</div>
<div class="t" style="top:184.18px;font-size:12.8px;color:#4a4a4a;left:288.5px;width:40px;text-align:center;">C</div>
<div class="t" style="top:184.18px;font-size:12.8px;color:#4a4a4a;left:400.7px;width:40px;text-align:center;">D</div>
<div class="t" style="top:184.18px;font-size:12.8px;color:#4a4a4a;left:512.9px;width:40px;text-align:center;">E</div>
<div class="t" style="top:184.18px;font-size:12.8px;color:#4a4a4a;left:625.1px;width:40px;text-align:center;">F</div>
<div class="t" style="top:184.18px;font-size:12.8px;color:#2f6d3d;left:1015px;width:40px;text-align:center;">G</div>
<div class="a" style="left:27.1px;top:177px;width:1px;height:24.2px;background:#cdcdcd;"></div>
<div class="a" style="left:139.7px;top:177px;width:1px;height:24.2px;background:#cdcdcd;"></div>
<div class="a" style="left:251.9px;top:177px;width:1px;height:24.2px;background:#cdcdcd;"></div>
<div class="a" style="left:364.1px;top:177px;width:1px;height:24.2px;background:#cdcdcd;"></div>
<div class="a" style="left:476.3px;top:177px;width:1px;height:24.2px;background:#cdcdcd;"></div>
<div class="a" style="left:588.5px;top:177px;width:1px;height:24.2px;background:#cdcdcd;"></div>
<div class="a" style="left:700.7px;top:177px;width:1px;height:24.2px;background:#cdcdcd;"></div>
<div class="a" style="left:140px;top:201.2px;width:1px;height:574.8px;background:#cdcdcd;"></div>
<div class="a" style="left:252px;top:201.2px;width:1px;height:574.8px;background:#cdcdcd;"></div>
<div class="a" style="left:364px;top:201.2px;width:1px;height:574.8px;background:#cdcdcd;"></div>
<div class="a" style="left:476px;top:201.2px;width:1px;height:574.8px;background:#cdcdcd;"></div>
<div class="a" style="left:588px;top:201.2px;width:1px;height:574.8px;background:#cdcdcd;"></div>
<div class="a" style="left:701px;top:201.2px;width:1px;height:574.8px;background:#cdcdcd;"></div>
<div class="a" style="left:0px;top:220px;width:1202.3px;height:1px;background:#cdcdcd;"></div>
<div class="a" style="left:0px;top:240px;width:1202.3px;height:1px;background:#cdcdcd;"></div>
<div class="a" style="left:0px;top:260px;width:1202.3px;height:1px;background:#cdcdcd;"></div>
<div class="a" style="left:0px;top:281px;width:1202.3px;height:1px;background:#cdcdcd;"></div>
<div class="a" style="left:0px;top:301px;width:1202.3px;height:1px;background:#cdcdcd;"></div>
<div class="a" style="left:0px;top:321px;width:1202.3px;height:1px;background:#cdcdcd;"></div>
<div class="a" style="left:0px;top:342px;width:1202.3px;height:1px;background:#cdcdcd;"></div>
<div class="a" style="left:0px;top:362px;width:1202.3px;height:1px;background:#cdcdcd;"></div>
<div class="a" style="left:0px;top:382px;width:1202.3px;height:1px;background:#cdcdcd;"></div>
<div class="a" style="left:0px;top:402px;width:1202.3px;height:1px;background:#cdcdcd;"></div>
<div class="a" style="left:0px;top:423px;width:1202.3px;height:1px;background:#cdcdcd;"></div>
<div class="a" style="left:0px;top:443px;width:1202.3px;height:1px;background:#cdcdcd;"></div>
<div class="a" style="left:0px;top:463px;width:1202.3px;height:1px;background:#cdcdcd;"></div>
<div class="a" style="left:0px;top:484px;width:1202.3px;height:1px;background:#cdcdcd;"></div>
<div class="a" style="left:0px;top:504px;width:1202.3px;height:1px;background:#cdcdcd;"></div>
<div class="a" style="left:0px;top:524px;width:1202.3px;height:1px;background:#cdcdcd;"></div>
<div class="a" style="left:0px;top:544px;width:1202.3px;height:1px;background:#cdcdcd;"></div>
<div class="a" style="left:0px;top:564px;width:1202.3px;height:1px;background:#cdcdcd;"></div>
<div class="a" style="left:0px;top:584px;width:1202.3px;height:1px;background:#cdcdcd;"></div>
<div class="a" style="left:0px;top:604px;width:1202.3px;height:1px;background:#cdcdcd;"></div>
<div class="a" style="left:0px;top:623px;width:1202.3px;height:1px;background:#cdcdcd;"></div>
<div class="a" style="left:0px;top:643px;width:1202.3px;height:1px;background:#cdcdcd;"></div>
<div class="a" style="left:0px;top:663px;width:1202.3px;height:1px;background:#cdcdcd;"></div>
<div class="a" style="left:0px;top:683px;width:1202.3px;height:1px;background:#cdcdcd;"></div>
<div class="a" style="left:0px;top:703px;width:1202.3px;height:1px;background:#cdcdcd;"></div>
<div class="a" style="left:0px;top:723px;width:1202.3px;height:1px;background:#cdcdcd;"></div>
<div class="a" style="left:0px;top:743px;width:1202.3px;height:1px;background:#cdcdcd;"></div>
<div class="a" style="left:0px;top:762px;width:1202.3px;height:1px;background:#cdcdcd;"></div>
<div class="t" style="top:206.55px;font-size:13.3px;color:#484848;left:-0.2px;width:28px;text-align:center;">1</div>
<div class="t" style="top:226.35px;font-size:13.3px;color:#484848;left:-0.2px;width:28px;text-align:center;">2</div>
<div class="t" style="top:246.15px;font-size:13.3px;color:#484848;left:-0.2px;width:28px;text-align:center;">3</div>
<div class="t" style="top:266.85px;font-size:13.3px;color:#2f6d3d;font-weight:bold;left:-0.2px;width:28px;text-align:center;">4</div>
<div class="t" style="top:287.12px;font-size:13.3px;color:#484848;left:-0.2px;width:28px;text-align:center;">5</div>
<div class="t" style="top:307.39px;font-size:13.3px;color:#484848;left:-0.2px;width:28px;text-align:center;">6</div>
<div class="t" style="top:327.66px;font-size:13.3px;color:#484848;left:-0.2px;width:28px;text-align:center;">7</div>
<div class="t" style="top:347.93px;font-size:13.3px;color:#484848;left:-0.2px;width:28px;text-align:center;">8</div>
<div class="t" style="top:368.2px;font-size:13.3px;color:#484848;left:-0.2px;width:28px;text-align:center;">9</div>
<div class="t" style="top:388.47px;font-size:13.3px;color:#484848;left:-0.2px;width:28px;text-align:center;">10</div>
<div class="t" style="top:408.74px;font-size:13.3px;color:#484848;left:-0.2px;width:28px;text-align:center;">11</div>
<div class="t" style="top:429.01px;font-size:13.3px;color:#484848;left:-0.2px;width:28px;text-align:center;">12</div>
<div class="t" style="top:449.28px;font-size:13.3px;color:#484848;left:-0.2px;width:28px;text-align:center;">13</div>
<div class="t" style="top:469.55px;font-size:13.3px;color:#484848;left:-0.2px;width:28px;text-align:center;">14</div>
<div class="t" style="top:489.82px;font-size:13.3px;color:#484848;left:-0.2px;width:28px;text-align:center;">15</div>
<div class="t" style="top:510.09px;font-size:13.3px;color:#484848;left:-0.2px;width:28px;text-align:center;">16</div>
<div class="t" style="top:529.96px;font-size:13.3px;color:#484848;left:-0.2px;width:28px;text-align:center;">17</div>
<div class="t" style="top:549.83px;font-size:13.3px;color:#484848;left:-0.2px;width:28px;text-align:center;">18</div>
<div class="t" style="top:569.7px;font-size:13.3px;color:#484848;left:-0.2px;width:28px;text-align:center;">19</div>
<div class="t" style="top:589.57px;font-size:13.3px;color:#484848;left:-0.2px;width:28px;text-align:center;">20</div>
<div class="t" style="top:609.44px;font-size:13.3px;color:#484848;left:-0.2px;width:28px;text-align:center;">21</div>
<div class="t" style="top:629.31px;font-size:13.3px;color:#484848;left:-0.2px;width:28px;text-align:center;">22</div>
<div class="t" style="top:649.18px;font-size:13.3px;color:#484848;left:-0.2px;width:28px;text-align:center;">23</div>
<div class="t" style="top:669.05px;font-size:13.3px;color:#484848;left:-0.2px;width:28px;text-align:center;">24</div>
<div class="t" style="top:688.92px;font-size:13.3px;color:#484848;left:-0.2px;width:28px;text-align:center;">25</div>
<div class="t" style="top:708.79px;font-size:13.3px;color:#484848;left:-0.2px;width:28px;text-align:center;">26</div>
<div class="t" style="top:728.66px;font-size:13.3px;color:#484848;left:-0.2px;width:28px;text-align:center;">27</div>
<div class="t" style="top:748.53px;font-size:13.3px;color:#484848;left:-0.2px;width:28px;text-align:center;">28</div>
<div class="t" style="top:768.4px;font-size:13.3px;color:#484848;left:-0.2px;width:28px;text-align:center;">29</div>
<div class="a" style="left:27.6px;top:221px;width:1174.7px;height:39.6px;background:#d5e0cf;"></div>
<div class="a" style="left:364.6px;top:260.6px;width:112.2px;height:263.94px;background:#f0e7c1;"></div>
<div class="a" style="left:476.8px;top:260.6px;width:112.2px;height:263.94px;background:#ecd7cb;"></div>
<div class="a" style="left:589px;top:260.6px;width:112.2px;height:263.94px;background:#d3d7e5;"></div>
<div class="a" style="left:140.2px;top:260.6px;width:112.2px;height:20.7px;background:#dfe3ed;"></div>
<div class="a" style="left:252.4px;top:260.6px;width:112.2px;height:20.7px;background:#ecdfde;"></div>
<div class="a" style="left:364.6px;top:260.6px;width:112.2px;height:20.7px;background:#ded3c0;"></div>
<div class="a" style="left:476.8px;top:260.6px;width:112.2px;height:20.7px;background:#dad0bd;"></div>
<div class="a" style="left:589px;top:260.6px;width:112.2px;height:20.7px;background:#cdc7d9;"></div>
<svg style="left:0;top:0" width="1203" height="780" viewBox="0 0 1203 780"><path d="M27.6 221H1202.3 M140.2 240.8H701.2 M27.6 260.6H1202.3 M27.6 281.3H1202.3 M27.6 301.57H1202.3 M27.6 321.84H1202.3 M27.6 342.11H1202.3 M27.6 362.38H1202.3 M27.6 382.65H1202.3 M27.6 402.92H1202.3 M27.6 423.19H1202.3 M27.6 443.46H1202.3 M27.6 463.73H1202.3 M27.6 484H1202.3 M27.6 504.27H1202.3 M27.6 524.54H1202.3 M140.2 221V524.54 M252.4 240.8V524.54 M364.6 240.8V524.54 M476.8 240.8V524.54 M589 240.8V524.54 M701.2 221V524.54" fill="none" stroke="#000" stroke-opacity=".4" stroke-width="1.2"/><path d="M27.6 221H1202.3 M140.2 240.8H701.2 M27.6 260.6H1202.3 M27.6 281.3H1202.3 M27.6 301.57H1202.3 M27.6 321.84H1202.3 M27.6 342.11H1202.3 M27.6 362.38H1202.3 M27.6 382.65H1202.3 M27.6 402.92H1202.3 M27.6 423.19H1202.3 M27.6 443.46H1202.3 M27.6 463.73H1202.3 M27.6 484H1202.3 M27.6 504.27H1202.3 M27.6 524.54H1202.3 M140.2 221V524.54 M252.4 240.8V524.54 M364.6 240.8V524.54 M476.8 240.8V524.54 M589 240.8V524.54 M701.2 221V524.54" fill="none" stroke="#111" stroke-opacity=".85" stroke-width="1.2" stroke-dasharray="1 1"/></svg>
<div class="t" style="top:236.21px;font-size:12.1px;color:#111;font-weight:bold;left:27.9px;width:112px;text-align:center;">Марка, модель</div>
<div class="t" style="top:226.91px;font-size:12.1px;color:#111;font-weight:bold;left:220.7px;width:400px;text-align:center;">Характеристики автомобилей</div>
<div class="t" style="top:246.51px;font-size:12.1px;color:#111;font-weight:bold;left:131.3px;width:130px;text-align:center;">Год выпуска</div>
<div class="t" style="top:246.51px;font-size:12.1px;color:#111;font-weight:bold;left:243.5px;width:130px;text-align:center;">Объем, л</div>
<div class="t" style="top:246.4px;font-size:12.35px;color:#111;font-weight:bold;left:355.7px;width:130px;text-align:center;">Коробка передач</div>
<div class="t" style="top:246.51px;font-size:12.1px;color:#111;font-weight:bold;left:467.9px;width:130px;text-align:center;">Привод</div>
<div class="t" style="top:246.51px;font-size:12.1px;color:#111;font-weight:bold;left:580.1px;width:130px;text-align:center;">Руль</div>
<div class="t" style="top:236.31px;font-size:12.1px;color:#111;font-weight:bold;left:885px;width:300px;text-align:center;">Данные для квитанции</div>
<div class="t" style="top:266.43px;font-size:12.6px;color:#111;left:18.9px;width:130px;text-align:center;-webkit-text-stroke:0.34px #111;">Honda Vezel</div>
<div class="t" style="top:266.43px;font-size:12.6px;color:#111;left:131.3px;width:130px;text-align:center;-webkit-text-stroke:0.34px #111;">2015</div>
<div class="t" style="top:266.43px;font-size:12.6px;color:#111;left:243.5px;width:130px;text-align:center;-webkit-text-stroke:0.34px #111;">1,5</div>
<div class="t" style="top:266.43px;font-size:12.6px;color:#111;left:355.7px;width:130px;text-align:center;-webkit-text-stroke:0.34px #111;">вариатор</div>
<div class="t" style="top:266.43px;font-size:12.6px;color:#111;left:467.9px;width:130px;text-align:center;-webkit-text-stroke:0.34px #111;">передний</div>
<div class="t" style="top:266.43px;font-size:12.6px;color:#111;left:580.1px;width:130px;text-align:center;-webkit-text-stroke:0.34px #111;">правый</div>
<div class="t" style="top:286.91px;font-size:12.6px;color:#111;left:18.9px;width:130px;text-align:center;-webkit-text-stroke:0.34px #111;">Lexus ES250</div>
<div class="t" style="top:286.91px;font-size:12.6px;color:#111;left:131.3px;width:130px;text-align:center;-webkit-text-stroke:0.34px #111;">2019</div>
<div class="t" style="top:286.91px;font-size:12.6px;color:#111;left:243.5px;width:130px;text-align:center;-webkit-text-stroke:0.34px #111;">2,0</div>
<div class="t" style="top:286.91px;font-size:12.6px;color:#111;left:355.7px;width:130px;text-align:center;-webkit-text-stroke:0.34px #111;">автомат</div>
<div class="t" style="top:286.91px;font-size:12.6px;color:#111;left:467.9px;width:130px;text-align:center;-webkit-text-stroke:0.34px #111;">4WD</div>
<div class="t" style="top:286.91px;font-size:12.6px;color:#111;left:580.1px;width:130px;text-align:center;-webkit-text-stroke:0.34px #111;">левый</div>
<div class="t" style="top:307.18px;font-size:12.6px;color:#111;left:18.9px;width:130px;text-align:center;-webkit-text-stroke:0.34px #111;">Lexus RX300</div>
<div class="t" style="top:307.18px;font-size:12.6px;color:#111;left:131.3px;width:130px;text-align:center;-webkit-text-stroke:0.34px #111;">2019</div>
<div class="t" style="top:307.18px;font-size:12.6px;color:#111;left:243.5px;width:130px;text-align:center;-webkit-text-stroke:0.34px #111;">2,0</div>
<div class="t" style="top:307.18px;font-size:12.6px;color:#111;left:355.7px;width:130px;text-align:center;-webkit-text-stroke:0.34px #111;">автомат</div>
<div class="t" style="top:307.18px;font-size:12.6px;color:#111;left:467.9px;width:130px;text-align:center;-webkit-text-stroke:0.34px #111;">4WD</div>
<div class="t" style="top:307.18px;font-size:12.6px;color:#111;left:580.1px;width:130px;text-align:center;-webkit-text-stroke:0.34px #111;">левый</div>
<div class="t" style="top:327.45px;font-size:12.6px;color:#111;left:18.9px;width:130px;text-align:center;-webkit-text-stroke:0.34px #111;">Mazda Axela</div>
<div class="t" style="top:327.45px;font-size:12.6px;color:#111;left:131.3px;width:130px;text-align:center;-webkit-text-stroke:0.34px #111;">2017</div>
<div class="t" style="top:327.45px;font-size:12.6px;color:#111;left:243.5px;width:130px;text-align:center;-webkit-text-stroke:0.34px #111;">1,5</div>
<div class="t" style="top:327.45px;font-size:12.6px;color:#111;left:355.7px;width:130px;text-align:center;-webkit-text-stroke:0.34px #111;">вариатор</div>
<div class="t" style="top:327.45px;font-size:12.6px;color:#111;left:467.9px;width:130px;text-align:center;-webkit-text-stroke:0.34px #111;">передний</div>
<div class="t" style="top:327.45px;font-size:12.6px;color:#111;left:580.1px;width:130px;text-align:center;-webkit-text-stroke:0.34px #111;">правый</div>
<div class="t" style="top:347.72px;font-size:12.6px;color:#111;left:18.9px;width:130px;text-align:center;-webkit-text-stroke:0.34px #111;">Mazda CX-3</div>
<div class="t" style="top:347.72px;font-size:12.6px;color:#111;left:131.3px;width:130px;text-align:center;-webkit-text-stroke:0.34px #111;">2019</div>
<div class="t" style="top:347.72px;font-size:12.6px;color:#111;left:243.5px;width:130px;text-align:center;-webkit-text-stroke:0.34px #111;">2,0</div>
<div class="t" style="top:347.72px;font-size:12.6px;color:#111;left:355.7px;width:130px;text-align:center;-webkit-text-stroke:0.34px #111;">вариатор</div>
<div class="t" style="top:347.72px;font-size:12.6px;color:#111;left:467.9px;width:130px;text-align:center;-webkit-text-stroke:0.34px #111;">передний</div>
<div class="t" style="top:347.72px;font-size:12.6px;color:#111;left:580.1px;width:130px;text-align:center;-webkit-text-stroke:0.34px #111;">правый</div>
<div class="t" style="top:367.99px;font-size:12.6px;color:#111;left:18.9px;width:130px;text-align:center;-webkit-text-stroke:0.34px #111;">Mitsubishi Pajero</div>
<div class="t" style="top:367.99px;font-size:12.6px;color:#111;left:131.3px;width:130px;text-align:center;-webkit-text-stroke:0.34px #111;">2017</div>
<div class="t" style="top:367.99px;font-size:12.6px;color:#111;left:243.5px;width:130px;text-align:center;-webkit-text-stroke:0.34px #111;">3,0</div>
<div class="t" style="top:367.99px;font-size:12.6px;color:#111;left:355.7px;width:130px;text-align:center;-webkit-text-stroke:0.34px #111;">автомат</div>
<div class="t" style="top:367.99px;font-size:12.6px;color:#111;left:467.9px;width:130px;text-align:center;-webkit-text-stroke:0.34px #111;">4WD</div>
<div class="t" style="top:367.99px;font-size:12.6px;color:#111;left:580.1px;width:130px;text-align:center;-webkit-text-stroke:0.34px #111;">правый</div>
<div class="t" style="top:388.26px;font-size:12.6px;color:#111;left:18.9px;width:130px;text-align:center;-webkit-text-stroke:0.34px #111;">Nissan Juke</div>
<div class="t" style="top:388.26px;font-size:12.6px;color:#111;left:131.3px;width:130px;text-align:center;-webkit-text-stroke:0.34px #111;">2017</div>
<div class="t" style="top:388.26px;font-size:12.6px;color:#111;left:243.5px;width:130px;text-align:center;-webkit-text-stroke:0.34px #111;">1,5</div>
<div class="t" style="top:388.26px;font-size:12.6px;color:#111;left:355.7px;width:130px;text-align:center;-webkit-text-stroke:0.34px #111;">вариатор</div>
<div class="t" style="top:388.26px;font-size:12.6px;color:#111;left:467.9px;width:130px;text-align:center;-webkit-text-stroke:0.34px #111;">4WD</div>
<div class="t" style="top:388.26px;font-size:12.6px;color:#111;left:580.1px;width:130px;text-align:center;-webkit-text-stroke:0.34px #111;">правый</div>
<div class="t" style="top:408.53px;font-size:12.6px;color:#111;left:18.9px;width:130px;text-align:center;-webkit-text-stroke:0.34px #111;">Nissan Note</div>
<div class="t" style="top:408.53px;font-size:12.6px;color:#111;left:131.3px;width:130px;text-align:center;-webkit-text-stroke:0.34px #111;">2017</div>
<div class="t" style="top:408.53px;font-size:12.6px;color:#111;left:243.5px;width:130px;text-align:center;-webkit-text-stroke:0.34px #111;">1,2</div>
<div class="t" style="top:408.53px;font-size:12.6px;color:#111;left:355.7px;width:130px;text-align:center;-webkit-text-stroke:0.34px #111;">вариатор</div>
<div class="t" style="top:408.53px;font-size:12.6px;color:#111;left:467.9px;width:130px;text-align:center;-webkit-text-stroke:0.34px #111;">передний</div>
<div class="t" style="top:408.53px;font-size:12.6px;color:#111;left:580.1px;width:130px;text-align:center;-webkit-text-stroke:0.34px #111;">правый</div>
<div class="t" style="top:428.8px;font-size:12.6px;color:#111;left:18.9px;width:130px;text-align:center;-webkit-text-stroke:0.34px #111;">Nissan Skyline</div>
<div class="t" style="top:428.8px;font-size:12.6px;color:#111;left:131.3px;width:130px;text-align:center;-webkit-text-stroke:0.34px #111;">2017</div>
<div class="t" style="top:428.8px;font-size:12.6px;color:#111;left:243.5px;width:130px;text-align:center;-webkit-text-stroke:0.34px #111;">2,0</div>
<div class="t" style="top:428.8px;font-size:12.6px;color:#111;left:355.7px;width:130px;text-align:center;-webkit-text-stroke:0.34px #111;">автомат</div>
<div class="t" style="top:428.8px;font-size:12.6px;color:#111;left:467.9px;width:130px;text-align:center;-webkit-text-stroke:0.34px #111;">задний</div>
<div class="t" style="top:428.8px;font-size:12.6px;color:#111;left:580.1px;width:130px;text-align:center;-webkit-text-stroke:0.34px #111;">правый</div>
<div class="t" style="top:449.07px;font-size:12.6px;color:#111;left:18.9px;width:130px;text-align:center;-webkit-text-stroke:0.34px #111;">Subaru Impreza</div>
<div class="t" style="top:449.07px;font-size:12.6px;color:#111;left:131.3px;width:130px;text-align:center;-webkit-text-stroke:0.34px #111;">2019</div>
<div class="t" style="top:449.07px;font-size:12.6px;color:#111;left:243.5px;width:130px;text-align:center;-webkit-text-stroke:0.34px #111;">2,0</div>
<div class="t" style="top:449.07px;font-size:12.6px;color:#111;left:355.7px;width:130px;text-align:center;-webkit-text-stroke:0.34px #111;">вариатор</div>
<div class="t" style="top:449.07px;font-size:12.6px;color:#111;left:467.9px;width:130px;text-align:center;-webkit-text-stroke:0.34px #111;">передний</div>
<div class="t" style="top:449.07px;font-size:12.6px;color:#111;left:580.1px;width:130px;text-align:center;-webkit-text-stroke:0.34px #111;">левый</div>
<div class="t" style="top:469.34px;font-size:12.6px;color:#111;left:18.9px;width:130px;text-align:center;-webkit-text-stroke:0.34px #111;">Subaru Forester</div>
<div class="t" style="top:469.34px;font-size:12.6px;color:#111;left:131.3px;width:130px;text-align:center;-webkit-text-stroke:0.34px #111;">2021</div>
<div class="t" style="top:469.34px;font-size:12.6px;color:#111;left:243.5px;width:130px;text-align:center;-webkit-text-stroke:0.34px #111;">1,8</div>
<div class="t" style="top:469.34px;font-size:12.6px;color:#111;left:355.7px;width:130px;text-align:center;-webkit-text-stroke:0.34px #111;">вариатор</div>
<div class="t" style="top:469.34px;font-size:12.6px;color:#111;left:467.9px;width:130px;text-align:center;-webkit-text-stroke:0.34px #111;">4WD</div>
<div class="t" style="top:469.34px;font-size:12.6px;color:#111;left:580.1px;width:130px;text-align:center;-webkit-text-stroke:0.34px #111;">левый</div>
<div class="t" style="top:489.61px;font-size:12.6px;color:#111;left:18.9px;width:130px;text-align:center;-webkit-text-stroke:0.34px #111;">Subaru XV</div>
<div class="t" style="top:489.61px;font-size:12.6px;color:#111;left:131.3px;width:130px;text-align:center;-webkit-text-stroke:0.34px #111;">2018</div>
<div class="t" style="top:489.61px;font-size:12.6px;color:#111;left:243.5px;width:130px;text-align:center;-webkit-text-stroke:0.34px #111;">1,6</div>
<div class="t" style="top:489.61px;font-size:12.6px;color:#111;left:355.7px;width:130px;text-align:center;-webkit-text-stroke:0.34px #111;">вариатор</div>
<div class="t" style="top:489.61px;font-size:12.6px;color:#111;left:467.9px;width:130px;text-align:center;-webkit-text-stroke:0.34px #111;">4WD</div>
<div class="t" style="top:489.61px;font-size:12.6px;color:#111;left:580.1px;width:130px;text-align:center;-webkit-text-stroke:0.34px #111;">левый</div>
<div class="t" style="top:509.88px;font-size:12.6px;color:#111;left:18.9px;width:130px;text-align:center;-webkit-text-stroke:0.34px #111;">Suzuki Jimny</div>
<div class="t" style="top:509.88px;font-size:12.6px;color:#111;left:131.3px;width:130px;text-align:center;-webkit-text-stroke:0.34px #111;">2021</div>
<div class="t" style="top:509.88px;font-size:12.6px;color:#111;left:243.5px;width:130px;text-align:center;-webkit-text-stroke:0.34px #111;">0,7</div>
<div class="t" style="top:509.88px;font-size:12.6px;color:#111;left:355.7px;width:130px;text-align:center;-webkit-text-stroke:0.34px #111;">механика</div>
<div class="t" style="top:509.88px;font-size:12.6px;color:#111;left:467.9px;width:130px;text-align:center;-webkit-text-stroke:0.34px #111;">передний</div>
<div class="t" style="top:509.88px;font-size:12.6px;color:#111;left:580.1px;width:130px;text-align:center;-webkit-text-stroke:0.34px #111;">правый</div>
<div class="a" style="left:143.9px;top:259.15px;width:104.8px;height:2.3px;background:#3f66c0;"></div>
<div class="a" style="left:143.9px;top:280.65px;width:104.8px;height:2.3px;background:#3f66c0;"></div>
<div class="a" style="left:138.55px;top:265.1px;width:2.3px;height:11.8px;background:#3f66c0;"></div>
<div class="a" style="left:256.1px;top:259.15px;width:104.8px;height:2.3px;background:#b5383a;"></div>
<div class="a" style="left:256.1px;top:280.65px;width:104.8px;height:2.3px;background:#b5383a;"></div>
<div class="a" style="left:250.75px;top:265.1px;width:2.3px;height:11.8px;background:#b5383a;"></div>
<div class="a" style="left:368.3px;top:259.15px;width:104.8px;height:2.3px;background:#7a55c0;"></div>
<div class="a" style="left:368.3px;top:280.65px;width:104.8px;height:2.3px;background:#7a55c0;"></div>
<div class="a" style="left:362.95px;top:265.1px;width:2.3px;height:11.8px;background:#7a55c0;"></div>
<div class="a" style="left:480.5px;top:259.15px;width:104.8px;height:2.3px;background:#357a38;"></div>
<div class="a" style="left:480.5px;top:280.65px;width:104.8px;height:2.3px;background:#357a38;"></div>
<div class="a" style="left:475.15px;top:265.1px;width:2.3px;height:11.8px;background:#357a38;"></div>
<div class="a" style="left:592.7px;top:259.15px;width:104.8px;height:2.3px;background:#a6458e;"></div>
<div class="a" style="left:592.7px;top:280.65px;width:104.8px;height:2.3px;background:#a6458e;"></div>
<div class="a" style="left:587.35px;top:265.1px;width:2.3px;height:11.8px;background:#a6458e;"></div>
<div class="a" style="left:699.55px;top:265.1px;width:2.3px;height:11.8px;background:#a6458e;"></div>
<div class="a" style="left:137.6px;top:258.3px;width:5.2px;height:5.2px;background:#3f66c0;"></div>
<div class="a" style="left:137.6px;top:278.5px;width:5.2px;height:5.2px;background:#3f66c0;"></div>
<div class="a" style="left:249.8px;top:258.3px;width:5.2px;height:5.2px;background:#b5383a;"></div>
<div class="a" style="left:249.8px;top:278.5px;width:5.2px;height:5.2px;background:#b5383a;"></div>
<div class="a" style="left:362px;top:258.3px;width:5.2px;height:5.2px;background:#7a55c0;"></div>
<div class="a" style="left:362px;top:278.5px;width:5.2px;height:5.2px;background:#7a55c0;"></div>
<div class="a" style="left:474.2px;top:258.3px;width:5.2px;height:5.2px;background:#357a38;"></div>
<div class="a" style="left:474.2px;top:278.5px;width:5.2px;height:5.2px;background:#357a38;"></div>
<div class="a" style="left:586.4px;top:258.3px;width:5.2px;height:5.2px;background:#a6458e;"></div>
<div class="a" style="left:586.4px;top:278.5px;width:5.2px;height:5.2px;background:#a6458e;"></div>
<div class="a" style="left:698.6px;top:258.3px;width:5.2px;height:5.2px;background:#a6458e;"></div>
<div class="a" style="left:698.6px;top:278.5px;width:5.2px;height:5.2px;background:#a6458e;"></div>
<div class="a" style="left:26.6px;top:260.6px;width:2px;height:20.7px;background:#2f6d3d;"></div>
<div class="a" style="left:702.8px;top:262.5px;width:499.5px;height:17px;background:#f1f1f1;"></div>
<div class="a" style="left:705.2px;top:259px;width:497.1px;height:2.2px;background:#2f6d3d;"></div>
<div class="a" style="left:705.2px;top:280.5px;width:497.1px;height:2.2px;background:#2f6d3d;"></div>
<div class="a" style="left:701.8px;top:264.9px;width:1.8px;height:12.2px;background:#2f6d3d;"></div>
<div class="t" style="top:267.31px;font-size:12.54px;color:#111;left:704.4px;-webkit-text-stroke:0.34px #111;">=СЦЕП(B4;", объём ";C4;", коробка передач ";D4;", привод ";E4;", руль ";F4)</div>
<div class="a" style="left:1202.3px;top:176.6px;width:16px;height:615.4px;background:#ebebeb;border-left:1px solid #d6d6d6;"></div>
<div class="a" style="left:1206.4px;top:184px;width:9.6px;height:260px;background:#a9a9a9;border-radius:5px;"></div>
<div class="a" style="left:1204px;top:178.2px;width:12.6px;height:3.6px;background:#f1f1f1;border:1px solid #d6d6d6;border-bottom:none;border-radius:1.5px 1.5px 0 0;"></div>
<div class="a" style="left:1218.2px;top:176.6px;width:321.8px;height:643px;background:#e7e7e7;border-left:1px solid #c2c2c2;"></div>
<div class="a" style="left:1219.2px;top:176.6px;width:320.8px;height:28.6px;background:#dedede;"></div>
<div class="t" style="top:184.2px;font-size:16.6px;color:#1e1e1e;left:1239.2px;-webkit-text-stroke:0.2px #1e1e1e;">Построитель формул</div>
<div class="a" style="left:1516.5px;top:184.1px;width:14.6px;height:14.6px;background:#484848;border-radius:50%;"></div>
<svg style="left:1520.2px;top:187.8px;" width="7.2" height="7.2" viewBox="0 0 7.2 7.2"><path d="M.6 .6l6 6M6.6 .6l-6 6" stroke="#ededed" stroke-width="1.6" stroke-linecap="round"/></svg>
<svg style="left:1239px;top:217.4px;filter:drop-shadow(0 .6px .6px rgba(0,0,0,.18));" width="177" height="22" viewBox="0 0 177 22"><path d="M9 .6H171.4a4.6 4.6 0 0 1 4.6 4.6V16.4a4.6 4.6 0 0 1-4.6 4.6H9L.8 10.8z" fill="#f1f1f1" stroke="#cfcfcf" stroke-width="1" stroke-linejoin="round"/></svg>
<div class="t" style="top:221.74px;font-size:14.6px;color:#222;left:1251px;">Показать все функции</div>
<div class="t" style="top:255.01px;font-size:17px;color:#1e1e1e;left:1239px;">СЦЕП</div>
<div class="a" style="left:1524.6px;top:273px;width:15.4px;height:257.6px;background:#e9e9e9;border-left:1px solid #f0f0f0;"></div>
<div class="a" style="left:1528.2px;top:277.4px;width:7.6px;height:114.2px;background:#a8a8a8;border-radius:4px;"></div>
<div class="a" style="left:0;top:0;width:1524.6px;height:530.4px;overflow:hidden"><div class="t" style="top:283.18px;font-size:12.8px;color:#222;left:1239.6px;-webkit-text-stroke:0.15px #222;">Текст1</div>
<div class="t" style="top:282.22px;font-size:14px;color:#222;left:1291px;">=</div>
<div class="t" style="top:283.14px;font-size:12.9px;color:#808080;left:1310.2px;">"2015"</div>
<div class="a" style="left:1240.4px;top:305.1px;width:262px;height:21.2px;background:#f1f1f1;border:1px solid #e0e0e0;border-bottom-color:#cfcfcf;border-radius:1px;"></div>
<div class="t" style="top:309.42px;font-size:14px;color:#3f66c0;left:1244px;">B4</div>
<div class="a" style="left:1224.5px;top:310.4px;width:10.6px;height:10.6px;background:#6c6c6c;border-radius:50%;"></div>
<div class="a" style="left:1226.8px;top:314.8px;width:6px;height:1.8px;background:#efefef;"></div>
<svg style="left:1483.6px;top:309px;" width="16.2" height="13.4" viewBox="0 0 16.2 13.4"><rect x=".4" y=".4" width="15.4" height="12.6" fill="#f4f4f4" stroke="#b9c0cc" stroke-width=".8"/>
<rect x=".4" y=".4" width="5.2" height="3.6" fill="#3f66c0"/><path d="M.4 4h15.4M.4 8.4h15.4M5.6 .4v12.6M10.8 .4v12.6" stroke="#c4cad6" stroke-width=".8"/>
<rect x="8.4" y="8.6" width="7.4" height="4.4" fill="#bcd0ea"/>
<path d="M7.400 4.400l4.400 4.200" stroke="#b8322f" stroke-width="1.300" fill="none"/><path d="M6.400 3.600h4.200l-4.200 4z" fill="#b8322f"/></svg>
<div class="t" style="top:337.68px;font-size:12.8px;color:#222;left:1239.6px;-webkit-text-stroke:0.15px #222;">Текст2</div>
<div class="t" style="top:336.72px;font-size:14px;color:#222;left:1291px;">=</div>
<div class="t" style="top:337.64px;font-size:12.9px;color:#808080;left:1310.2px;">", объём "</div>
<div class="a" style="left:1240.4px;top:359.6px;width:262px;height:21.2px;background:#f1f1f1;border:1px solid #e0e0e0;border-bottom-color:#cfcfcf;border-radius:1px;"></div>
<div class="t" style="top:363.92px;font-size:14px;color:#1e1e1e;left:1244px;">", объём "</div>
<div class="a" style="left:1224.5px;top:364.9px;width:10.6px;height:10.6px;background:#6c6c6c;border-radius:50%;"></div>
<div class="a" style="left:1226.8px;top:369.3px;width:6px;height:1.8px;background:#efefef;"></div>
<svg style="left:1483.6px;top:363.5px;" width="16.2" height="13.4" viewBox="0 0 16.2 13.4"><rect x=".4" y=".4" width="15.4" height="12.6" fill="#f4f4f4" stroke="#b9c0cc" stroke-width=".8"/>
<rect x=".4" y=".4" width="5.2" height="3.6" fill="#3f66c0"/><path d="M.4 4h15.4M.4 8.4h15.4M5.6 .4v12.6M10.8 .4v12.6" stroke="#c4cad6" stroke-width=".8"/>
<rect x="8.4" y="8.6" width="7.4" height="4.4" fill="#bcd0ea"/>
<path d="M7.400 4.400l4.400 4.200" stroke="#b8322f" stroke-width="1.300" fill="none"/><path d="M6.400 3.600h4.200l-4.200 4z" fill="#b8322f"/></svg>
<div class="t" style="top:392.18px;font-size:12.8px;color:#222;left:1239.6px;-webkit-text-stroke:0.15px #222;">Текст3</div>
<div class="t" style="top:391.22px;font-size:14px;color:#222;left:1291px;">=</div>
<div class="t" style="top:392.14px;font-size:12.9px;color:#808080;left:1310.2px;">"1,5"</div>
<div class="a" style="left:1240.4px;top:414.1px;width:262px;height:21.2px;background:#f1f1f1;border:1px solid #e0e0e0;border-bottom-color:#cfcfcf;border-radius:1px;"></div>
<div class="t" style="top:418.42px;font-size:14px;color:#b5312f;left:1244px;">C4</div>
<div class="a" style="left:1224.5px;top:419.4px;width:10.6px;height:10.6px;background:#6c6c6c;border-radius:50%;"></div>
<div class="a" style="left:1226.8px;top:423.8px;width:6px;height:1.8px;background:#efefef;"></div>
<svg style="left:1483.6px;top:418px;" width="16.2" height="13.4" viewBox="0 0 16.2 13.4"><rect x=".4" y=".4" width="15.4" height="12.6" fill="#f4f4f4" stroke="#b9c0cc" stroke-width=".8"/>
<rect x=".4" y=".4" width="5.2" height="3.6" fill="#3f66c0"/><path d="M.4 4h15.4M.4 8.4h15.4M5.6 .4v12.6M10.8 .4v12.6" stroke="#c4cad6" stroke-width=".8"/>
<rect x="8.4" y="8.6" width="7.4" height="4.4" fill="#bcd0ea"/>
<path d="M7.400 4.400l4.400 4.200" stroke="#b8322f" stroke-width="1.300" fill="none"/><path d="M6.400 3.600h4.200l-4.200 4z" fill="#b8322f"/></svg>
<div class="t" style="top:446.68px;font-size:12.8px;color:#222;left:1239.6px;-webkit-text-stroke:0.15px #222;">Текст4</div>
<div class="t" style="top:445.72px;font-size:14px;color:#222;left:1291px;">=</div>
<div class="t" style="top:446.64px;font-size:12.9px;color:#808080;left:1310.2px;">", коробка передач "</div>
<div class="a" style="left:1240.4px;top:468.6px;width:262px;height:21.2px;background:#f1f1f1;border:1px solid #e0e0e0;border-bottom-color:#cfcfcf;border-radius:1px;"></div>
<div class="t" style="top:472.92px;font-size:14px;color:#1e1e1e;left:1244px;">", коробка передач "</div>
<div class="a" style="left:1224.5px;top:473.9px;width:10.6px;height:10.6px;background:#6c6c6c;border-radius:50%;"></div>
<div class="a" style="left:1226.8px;top:478.3px;width:6px;height:1.8px;background:#efefef;"></div>
<svg style="left:1483.6px;top:472.5px;" width="16.2" height="13.4" viewBox="0 0 16.2 13.4"><rect x=".4" y=".4" width="15.4" height="12.6" fill="#f4f4f4" stroke="#b9c0cc" stroke-width=".8"/>
<rect x=".4" y=".4" width="5.2" height="3.6" fill="#3f66c0"/><path d="M.4 4h15.4M.4 8.4h15.4M5.6 .4v12.6M10.8 .4v12.6" stroke="#c4cad6" stroke-width=".8"/>
<rect x="8.4" y="8.6" width="7.4" height="4.4" fill="#bcd0ea"/>
<path d="M7.400 4.400l4.400 4.200" stroke="#b8322f" stroke-width="1.300" fill="none"/><path d="M6.400 3.600h4.200l-4.200 4z" fill="#b8322f"/></svg>
<div class="t" style="top:501.18px;font-size:12.8px;color:#222;left:1239.6px;-webkit-text-stroke:0.15px #222;">Текст5</div>
<div class="t" style="top:500.22px;font-size:14px;color:#222;left:1291px;">=</div>
<div class="t" style="top:501.14px;font-size:12.9px;color:#808080;left:1310.2px;">"вариатор"</div>
<div class="a" style="left:1240.4px;top:523.1px;width:262px;height:21.2px;background:#f1f1f1;border:1px solid #e0e0e0;border-bottom-color:#cfcfcf;border-radius:1px;"></div>
<div class="t" style="top:527.42px;font-size:14px;color:#7a55c0;left:1244px;">D4</div>
<div class="a" style="left:1224.5px;top:528.4px;width:10.6px;height:10.6px;background:#6c6c6c;border-radius:50%;"></div>
<div class="a" style="left:1226.8px;top:532.8px;width:6px;height:1.8px;background:#efefef;"></div>
<svg style="left:1483.6px;top:527px;" width="16.2" height="13.4" viewBox="0 0 16.2 13.4"><rect x=".4" y=".4" width="15.4" height="12.6" fill="#f4f4f4" stroke="#b9c0cc" stroke-width=".8"/>
<rect x=".4" y=".4" width="5.2" height="3.6" fill="#3f66c0"/><path d="M.4 4h15.4M.4 8.4h15.4M5.6 .4v12.6M10.8 .4v12.6" stroke="#c4cad6" stroke-width=".8"/>
<rect x="8.4" y="8.6" width="7.4" height="4.4" fill="#bcd0ea"/>
<path d="M7.400 4.400l4.400 4.200" stroke="#b8322f" stroke-width="1.300" fill="none"/><path d="M6.400 3.600h4.200l-4.200 4z" fill="#b8322f"/></svg>
</div>
<div class="a" style="left:1219.6px;top:330.4px;width:181px;height:55.6px;border:2px solid #e0452c;"></div>
<div class="a" style="left:1219.6px;top:441.6px;width:222.8px;height:52px;border:2px solid #e0452c;"></div>
<div class="a" style="left:1219.2px;top:530.4px;width:320.8px;height:14.4px;background:#ececec;border-top:1px solid #f2f2f2;"></div>
<div class="a" style="left:1219.2px;top:544.8px;width:320.8px;height:275px;background:#e9e9e9;"></div>
<div class="t" style="top:554.42px;font-size:12.5px;color:#222;left:1240.6px;">Результат: "2015, объём 1,5, коробк...</div>
<div class="a" style="left:1463.8px;top:550.8px;width:57px;height:17.6px;background:#f6f6f6;border-radius:4.5px;box-shadow:0 .5px 1.2px rgba(0,0,0,.35),0 0 0 .5px rgba(0,0,0,.08);"></div>
<div class="t" style="top:553.48px;font-size:12.6px;color:#222;left:1463.8px;width:57px;text-align:center;-webkit-text-stroke:0.2px;">Готово</div>
<div class="a" style="left:1238.6px;top:580.2px;width:282.2px;height:1px;background:#d3d3d3;"></div>
<div class="t" style="top:590.46px;font-size:22px;color:#4a78c8;font-weight:bold;left:1242.4px;font-family:&quot;Liberation Serif&quot;,serif;font-style:italic;">f</div>
<div class="t" style="top:595.17px;font-size:17.5px;color:#4a78c8;font-weight:bold;left:1249.6px;font-family:&quot;Liberation Serif&quot;,serif;font-style:italic;">x</div>
<div class="t" style="top:594.72px;font-size:17.2px;color:#1a1a1a;font-weight:bold;left:1265.4px;">СЦЕП</div>
<div class="t" style="top:626.31px;font-size:12.1px;color:#262626;left:1243.6px;-webkit-text-stroke:0.15px;">Объединяет список или диапазон строк</div>
<div class="t" style="top:642.81px;font-size:12.1px;color:#262626;left:1243.6px;-webkit-text-stroke:0.15px;">текста.</div>
<div class="t" style="top:672.13px;font-size:14.2px;color:#1a1a1a;font-weight:bold;left:1243.8px;">Синтаксис</div>
<div class="t" style="top:694.51px;font-size:12.1px;color:#262626;left:1243.8px;-webkit-text-stroke:0.15px;">СЦЕП(текст1;...)</div>
<div class="a" style="left:1245.4px;top:724px;width:3.6px;height:3.6px;background:#222;"></div>
<div class="t" style="top:720.11px;font-size:12.1px;color:#262626;left:1258.4px;-webkit-text-stroke:0.15px;"><b>Текст1</b>: текст1;текст2;... От 1 до 254</div>
<div class="t" style="top:737.11px;font-size:12.1px;color:#262626;left:1258.4px;-webkit-text-stroke:0.15px;">текстовых строк или диапазонов можно</div>
<div class="t" style="top:754.51px;font-size:12.1px;color:#262626;left:1258.4px;-webkit-text-stroke:0.15px;">объединить в одну строку.</div>
<div class="a" style="left:1511.6px;top:624.4px;width:14px;height:151.6px;background:#ececec;border-left:1px solid #dedede;"></div>
<div class="a" style="left:1515.8px;top:628px;width:8px;height:32px;background:#a8a8a8;border-radius:4px;"></div>
<div class="t" style="top:786.41px;font-size:13.6px;color:#2f6d3d;left:1246.6px;text-decoration:underline;text-underline-offset:1.5px;text-decoration-thickness:1.3px;-webkit-text-stroke:0.2px;">Дополнительная справка по этой функции</div>
<div class="a" style="left:0px;top:776px;width:1202.3px;height:16px;background:#ebebeb;border-top:1px solid #dcdcdc;"></div>
<div class="a" style="left:1198.6px;top:776px;width:1px;height:16px;background:#d2d2d2;"></div>
<div class="a" style="left:3px;top:780.2px;width:357px;height:9.4px;background:#adadad;border-radius:5px;"></div>
<div class="a" style="left:0px;top:792px;width:1218.2px;height:27.6px;background:#e5e5e5;border-top:1px solid #d4d4d4;"></div>
<div class="a" style="left:65.5px;top:791.6px;width:83.8px;height:24.4px;background:#f0f0f0;border-radius:0 0 4.5px 4.5px;box-shadow:0 .6px 1.6px rgba(0,0,0,.4);"></div>
<div class="t" style="top:799.28px;font-size:12.6px;color:#2f6d3d;font-weight:bold;left:67.4px;width:80px;text-align:center;">СЦЕП</div>
<svg style="left:16.4px;top:800.7px;" width="7.8" height="10.6" viewBox="0 0 7.8 10.6"><path d="M7.8 0V10.6L0 5.3z" fill="#bababa"/></svg>
<svg style="left:41.2px;top:800.7px;" width="7.8" height="10.6" viewBox="0 0 7.8 10.6"><path d="M0 0V10.6L7.8 5.3z" fill="#bababa"/></svg>
<svg style="left:165.2px;top:799.8px;" width="10.6" height="10.6" viewBox="0 0 10.6 10.6"><path d="M5.3 0v10.6M0 5.3h10.6" stroke="#333" stroke-width="1.9"/></svg>
<div class="a" style="left:190px;top:793.2px;width:1px;height:21.4px;background:#cfcfcf;"></div>
<div class="a" style="left:0px;top:819.4px;width:1540px;height:23.6px;background:linear-gradient(#dedede,#d3d3d3);border-top:1.4px solid #b9b9b9;"></div>
<div class="t" style="top:826.2px;font-size:13.2px;color:#5c5c5c;left:26.6px;">Правка</div>
<svg style="left:1207.6px;top:825.2px;" width="14.4" height="14.4" viewBox="0 0 14.4 14.4"><rect x=".8" y=".8" width="12.8" height="12.8" rx="1" fill="none" stroke="#626262" stroke-width="1.5"/><path d="M5 .8v12.800M9.400 .8v12.800M.8 5h12.800M.8 9.400h12.800" stroke="#626262" stroke-width="1.4"/></svg>
<svg style="left:1245.2px;top:825.2px;" width="15.4" height="14.4" viewBox="0 0 15.4 14.4"><rect x=".8" y=".8" width="13.8" height="12.8" rx="1.6" fill="none" stroke="#626262" stroke-width="1.5"/><rect x="4.2" y="3.600" width="7" height="9.400" fill="none" stroke="#626262" stroke-width="1.1"/><path d="M5.800 6h3.800M5.800 8h3.800M5.800 10h3.800" stroke="#626262" stroke-width="1"/></svg>
<svg style="left:1283.6px;top:825.2px;" width="15.4" height="14.4" viewBox="0 0 15.4 14.4"><rect x=".8" y=".8" width="13.8" height="12.8" rx="1" fill="none" stroke="#626262" stroke-width="1.5"/><path d="M4.600 .8v6.400M9 .8v6.400M.8 10.400h8.200V7.200h5.600" fill="none" stroke="#626262" stroke-width="1.4"/></svg>
<div class="a" style="left:1319px;top:830.8px;width:8.4px;height:2.2px;background:#505050;"></div>
<div class="a" style="left:1335px;top:829.6px;width:106.4px;height:4.6px;background:#a2a2a2;border-radius:2.3px;"></div>
<div class="a" style="left:1381.2px;top:823.4px;width:17px;height:17px;background:#f4f4f4;border-radius:50%;box-shadow:0 .5px 1.600px rgba(0,0,0,.5);"></div>
<svg style="left:1449.4px;top:827.9px;" width="8" height="8" viewBox="0 0 8 8"><path d="M4 0v8M0 4h8" stroke="#505050" stroke-width="2"/></svg>
<div class="t" style="top:826.73px;font-size:12.5px;color:#565656;left:1477.8px;-webkit-text-stroke:0.2px #565656;">110 %</div>

</div></body></html>
